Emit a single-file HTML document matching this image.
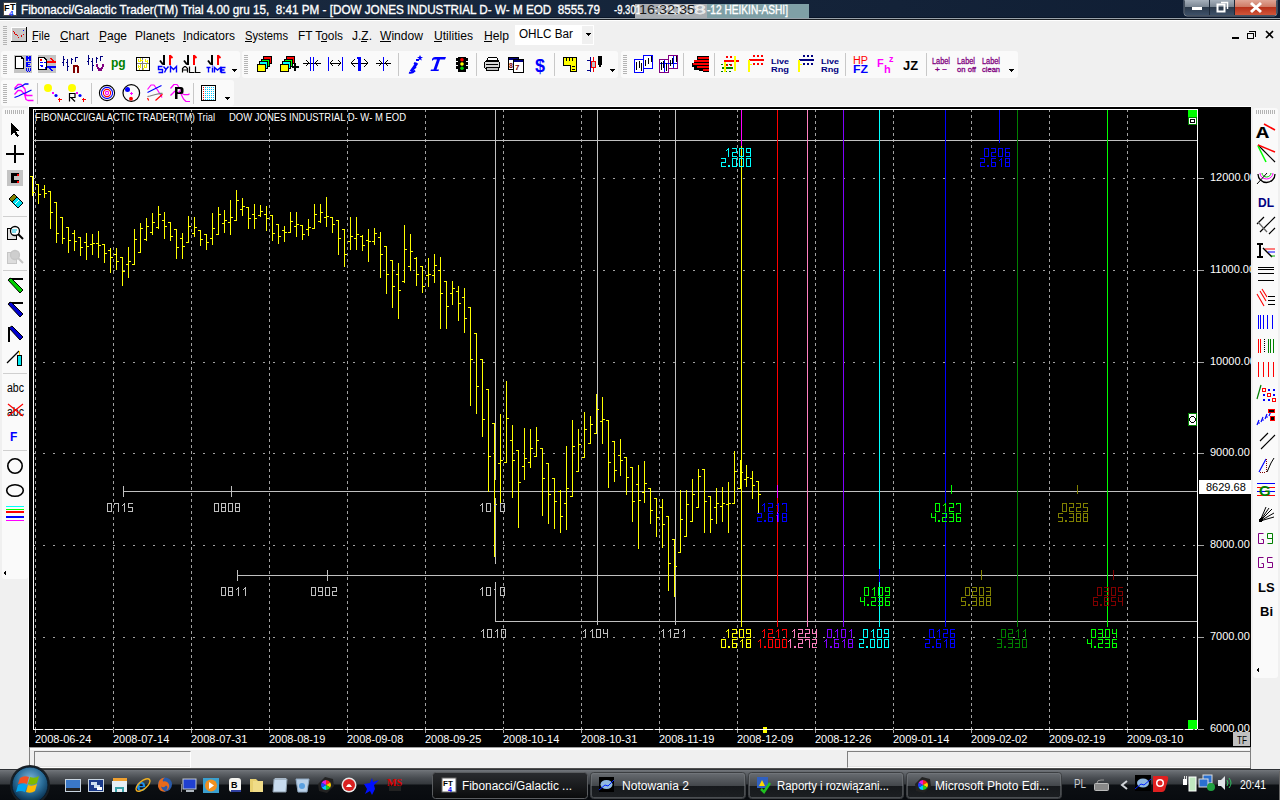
<!DOCTYPE html>
<html><head><meta charset="utf-8"><style>
*{margin:0;padding:0;box-sizing:border-box}
html,body{width:1280px;height:800px;overflow:hidden;background:#f0f0f0;font-family:"Liberation Sans",sans-serif;position:relative}
.a{position:absolute}
.title{left:0;top:0;width:1280px;height:17px;background:linear-gradient(90deg,#1b2b40 0%,#16263c 40%,#132238 70%,#0f1d33 100%)}
.panel{background:#fafafa;border-radius:3px}
.grip{background:repeating-linear-gradient(180deg,#b4b4b4 0 1px,transparent 1px 2px)}
.gripv{background:repeating-linear-gradient(90deg,#b4b4b4 0 1px,transparent 1px 2px)}
</style></head>
<body>
<div class="a title"></div>
<div class="a" style="left:0;top:17px;width:1280px;height:1px;background:#0a1628"></div>
<div class="a" style="left:0;top:18px;width:1280px;height:1px;background:#9aa3ab"></div>
<div class="a" style="left:0;top:19px;width:1280px;height:1px;background:#1a1e22"></div>
<div class="a" style="left:0;top:20px;width:1280px;height:1px;background:#fff"></div>
<div class="a" style="left:635px;top:4px;width:72px;height:14px;background:#a9aeb3"></div>
<div class="a" style="left:707px;top:4px;width:102px;height:14px;background:#7fa0a6"></div>
<svg class="a" style="left:0;top:0" width="1280" height="22"><text x="21" y="13.5" font-family="Liberation Sans" font-size="12.5" fill="#fff" stroke="#fff" stroke-width="0.35" textLength="579" lengthAdjust="spacingAndGlyphs">Fibonacci/Galactic Trader(TM) Trial 4.00 gru 15,&#160; 8:41 PM - [DOW JONES INDUSTRIAL D- W- M EOD&#160; 8555.79</text><text x="614" y="13.5" font-family="Liberation Sans" font-size="12.5" fill="#fff" stroke="#fff" stroke-width="0.35" textLength="27" lengthAdjust="spacingAndGlyphs">-9.301</text><text x="650" y="13.5" font-family="Liberation Sans" font-size="12.5" fill="#fff" stroke="#fff" stroke-width="0.35" fill-opacity=".6" textLength="56" lengthAdjust="spacingAndGlyphs">-2008</text><text x="707" y="13.5" font-family="Liberation Sans" font-size="12.5" fill="#fff" stroke="#fff" stroke-width="0.35" textLength="81" lengthAdjust="spacingAndGlyphs">-12 HEIKIN-ASHI]</text><text x="639" y="14" font-family="Liberation Sans" font-size="13" fill="#1a1a1a" textLength="56" lengthAdjust="spacingAndGlyphs">16:32:35</text></svg>
<svg class="a" style="left:0;top:0" width="1280" height="800"><rect x="3" y="2" width="14" height="14" fill="#fff"/><rect x="3.5" y="2.5" width="13" height="13" fill="none" stroke="#444"/><text x="4" y="11" font-family="Liberation Sans" font-size="9" fill="#000" font-weight="bold" >F</text><text x="10" y="10" font-family="Liberation Sans" font-size="9" fill="#000" font-weight="bold" >T</text><text x="9" y="16" font-family="Liberation Sans" font-size="8" fill="#1a3cff" font-weight="bold" >4</text><defs>
<linearGradient id="gb" x1="0" y1="0" x2="0" y2="1"><stop offset="0" stop-color="#a6b0bb"/><stop offset=".45" stop-color="#7b8794"/><stop offset=".5" stop-color="#2c3a4b"/><stop offset="1" stop-color="#3d5068"/></linearGradient>
<linearGradient id="gr" x1="0" y1="0" x2="0" y2="1"><stop offset="0" stop-color="#e0a595"/><stop offset=".45" stop-color="#cf7b66"/><stop offset=".5" stop-color="#b8321b"/><stop offset="1" stop-color="#d0553a"/></linearGradient>
</defs><path d="M1184 0H1277V13Q1277 16 1274 16H1187Q1184 16 1184 13Z" fill="#1c2838" stroke="#c8d0d8" stroke-opacity=".5"/><rect x="1185" y="0" width="24" height="15" fill="url(#gb)"/><rect x="1210" y="0" width="24" height="15" fill="url(#gb)"/><rect x="1235" y="0" width="41" height="15" fill="url(#gr)"/><rect x="1209" y="0" width="1" height="15" fill="#1c2838"/><rect x="1234" y="0" width="1" height="15" fill="#1c2838"/><rect x="1192" y="7" width="10" height="3" fill="#fff"/><rect x="1217.5" y="4.5" width="7" height="7" fill="none" stroke="#fff" stroke-width="2"/><path d="M1221 2.5H1227.5V9" fill="none" stroke="#fff" stroke-width="1.5"/><path d="M1251 3L1261 12M1261 3L1251 12" stroke="#fff" stroke-width="3" shape-rendering="geometricPrecision"/></svg>
<svg class="a" style="left:0;top:0" width="1280" height="800" shape-rendering="crispEdges"><rect x="3" y="26" width="4" height="1" fill="#b4b4b4"/><rect x="3" y="28" width="4" height="1" fill="#b4b4b4"/><rect x="3" y="30" width="4" height="1" fill="#b4b4b4"/><rect x="3" y="32" width="4" height="1" fill="#b4b4b4"/><rect x="3" y="34" width="4" height="1" fill="#b4b4b4"/><rect x="3" y="36" width="4" height="1" fill="#b4b4b4"/><rect x="3" y="38" width="4" height="1" fill="#b4b4b4"/><rect x="3" y="40" width="4" height="1" fill="#b4b4b4"/><rect x="3" y="42" width="4" height="1" fill="#b4b4b4"/><rect x="3" y="44" width="4" height="1" fill="#b4b4b4"/><rect x="11" y="27" width="15" height="15" fill="#c8c8c8"/><rect x="11" y="27" width="15" height="1" fill="#fff"/><rect x="11" y="27" width="1" height="15" fill="#fff"/><rect x="11" y="41" width="16" height="1" fill="#000"/><rect x="26" y="27" width="1" height="15" fill="#000"/><path d="M13 31L19 38L24 34" fill="none" stroke="#d00" stroke-width="1" stroke-dasharray="1 1"/><rect x="23" y="30" width="1" height="1" fill="#00f"/><rect x="515" y="25" width="79" height="20" fill="#fff"/><rect x="582" y="26" width="11" height="18" fill="#f0f0f0"/><path d="M585 33h6l-3 3z" fill="#000"/><rect x="1232" y="37" width="7" height="2" fill="#000"/><path d="M1247.5 33.5h6v5h-6zM1249.5 31.5h6v5" fill="none" stroke="#000"/><rect x="1247" y="33" width="7" height="1" fill="#000"/><rect x="1249" y="31" width="7" height="1" fill="#000"/><path d="M1266 31L1273 38M1273 31L1266 38" stroke="#000" stroke-width="1.6" shape-rendering="geometricPrecision"/></svg>
<svg class="a" style="left:0;top:0" width="1280" height="50"><text x="32" y="40" font-family="Liberation Sans" font-size="12" fill="#000" textLength="18" lengthAdjust="spacingAndGlyphs">File</text><text x="60" y="40" font-family="Liberation Sans" font-size="12" fill="#000" textLength="29" lengthAdjust="spacingAndGlyphs">Chart</text><text x="99" y="40" font-family="Liberation Sans" font-size="12" fill="#000" textLength="28" lengthAdjust="spacingAndGlyphs">Page</text><text x="135" y="40" font-family="Liberation Sans" font-size="12" fill="#000" textLength="40" lengthAdjust="spacingAndGlyphs">Planets</text><text x="183" y="40" font-family="Liberation Sans" font-size="12" fill="#000" textLength="52" lengthAdjust="spacingAndGlyphs">Indicators</text><text x="245" y="40" font-family="Liberation Sans" font-size="12" fill="#000" textLength="43" lengthAdjust="spacingAndGlyphs">Systems</text><text x="298" y="40" font-family="Liberation Sans" font-size="12" fill="#000" textLength="45" lengthAdjust="spacingAndGlyphs">FT Tools</text><text x="352" y="40" font-family="Liberation Sans" font-size="12" fill="#000" textLength="20" lengthAdjust="spacingAndGlyphs">J.Z.</text><text x="380" y="40" font-family="Liberation Sans" font-size="12" fill="#000" textLength="43" lengthAdjust="spacingAndGlyphs">Window</text><text x="434" y="40" font-family="Liberation Sans" font-size="12" fill="#000" textLength="39" lengthAdjust="spacingAndGlyphs">Utilities</text><text x="484" y="40" font-family="Liberation Sans" font-size="12" fill="#000" textLength="25" lengthAdjust="spacingAndGlyphs">Help</text><text x="519" y="38" font-family="Liberation Sans" font-size="12" fill="#000" textLength="54" lengthAdjust="spacingAndGlyphs">OHLC Bar</text><rect x="32" y="41" width="6" height="1" fill="#000"/><rect x="60" y="41" width="8" height="1" fill="#000"/><rect x="99" y="41" width="7" height="1" fill="#000"/><rect x="164" y="41" width="4" height="1" fill="#000"/><rect x="183" y="41" width="3" height="1" fill="#000"/><rect x="245" y="41" width="7" height="1" fill="#000"/><rect x="321" y="41" width="6" height="1" fill="#000"/><rect x="361" y="41" width="6" height="1" fill="#000"/><rect x="380" y="41" width="11" height="1" fill="#000"/><rect x="434" y="41" width="8" height="1" fill="#000"/><rect x="484" y="41" width="8" height="1" fill="#000"/></svg>
<div class="a panel" style="left:1px;top:51px;width:239px;height:27px"></div>
<div class="a grip" style="left:3px;top:55px;width:4px;height:20px"></div>
<div class="a panel" style="left:242px;top:51px;width:376px;height:27px"></div>
<div class="a grip" style="left:244px;top:55px;width:4px;height:20px"></div>
<div class="a panel" style="left:621px;top:51px;width:397px;height:27px"></div>
<div class="a grip" style="left:623px;top:55px;width:4px;height:20px"></div>
<div class="a panel" style="left:1px;top:80px;width:233px;height:26px"></div>
<div class="a grip" style="left:3px;top:84px;width:4px;height:19px"></div>
<div class="a panel" style="left:2px;top:108px;width:26px;height:471px"></div>
<div class="a gripv" style="left:5px;top:110px;width:20px;height:4px"></div>
<div class="a panel" style="left:1253px;top:108px;width:25px;height:570px"></div>
<div class="a gripv" style="left:1256px;top:110px;width:20px;height:4px"></div>
<svg class="a" style="left:0;top:0" width="1280" height="800" shape-rendering="crispEdges"><rect x="14" y="55" width="18" height="18" fill="#c4c4c4"/><path d="M15.5 56.5h5.5l2.5 2.5v9.5h-8z" fill="#fff" stroke="#000" stroke-width="1.2"/><rect x="21" y="56" width="1" height="3" fill="#000"/><rect x="21" y="58" width="3" height="1" fill="#000"/><rect x="26" y="56" width="2" height="5" fill="#0000ff"/><rect x="29" y="56" width="2" height="5" fill="#0000ff"/><rect x="28" y="57" width="1" height="2" fill="#0000ff"/><rect x="26" y="62" width="2" height="5" fill="#0000ff"/><rect x="26" y="62" width="5" height="1" fill="#0000ff"/><rect x="26" y="64" width="4" height="1" fill="#0000ff"/><rect x="26" y="66" width="5" height="1" fill="#0000ff"/><rect x="26" y="68" width="1" height="3" fill="#0000ff"/><rect x="30" y="68" width="1" height="3" fill="#0000ff"/><rect x="28" y="68" width="1" height="3" fill="#0000ff"/><rect x="27" y="71" width="1" height="1" fill="#0000ff"/><rect x="29" y="71" width="1" height="1" fill="#0000ff"/><rect x="38" y="55" width="18" height="18" fill="#c4c4c4"/><path d="M38.5 57.5h5.5l2.5 2.5v9.5h-8z" fill="#fff" stroke="#000" stroke-width="1.2"/><rect x="40" y="59" width="2" height="2" fill="#f00"/><rect x="40" y="62" width="3" height="1" fill="#00f"/><rect x="44" y="62" width="2" height="1" fill="#00f"/><rect x="40" y="65" width="3" height="1" fill="#00f"/><rect x="41" y="66" width="2" height="1" fill="#00f"/><rect x="45" y="67" width="1" height="2" fill="#00f"/><rect x="47" y="61" width="9" height="2" fill="#f00"/><path d="M49 58h2l4 3h-2z" fill="#f00"/><rect x="47" y="66" width="9" height="2" fill="#00f"/><path d="M48 68h2l4 3h-2z" fill="#00f"/><rect x="63" y="56" width="1" height="10" fill="#000080"/><rect x="62" y="62" width="1" height="1" fill="#000080"/><rect x="64" y="59" width="1" height="1" fill="#000080"/><rect x="67" y="59" width="1" height="12" fill="#000080"/><rect x="66" y="62" width="1" height="1" fill="#000080"/><rect x="68" y="66" width="1" height="1" fill="#000080"/><rect x="71" y="58" width="1" height="6" fill="#000080"/><rect x="72" y="59" width="1" height="1" fill="#000080"/><rect x="75" y="57" width="1" height="5" fill="#000080"/><rect x="76" y="57" width="2" height="1" fill="#000080"/><rect x="73" y="65" width="5" height="2" fill="#800000"/><rect x="73" y="65" width="2" height="8" fill="#800000"/><rect x="77" y="66" width="2" height="7" fill="#800000"/><rect x="88" y="55" width="1" height="10" fill="#000080"/><rect x="87" y="61" width="1" height="1" fill="#000080"/><rect x="89" y="58" width="1" height="1" fill="#000080"/><rect x="92" y="58" width="1" height="13" fill="#000080"/><rect x="91" y="61" width="1" height="1" fill="#000080"/><rect x="93" y="65" width="1" height="1" fill="#000080"/><rect x="96" y="57" width="1" height="6" fill="#000080"/><rect x="97" y="58" width="1" height="1" fill="#000080"/><rect x="100" y="56" width="1" height="5" fill="#000080"/><rect x="101" y="56" width="2" height="1" fill="#000080"/><rect x="96" y="64" width="2" height="3" fill="#800080"/><rect x="102" y="64" width="2" height="3" fill="#800080"/><rect x="97" y="67" width="2" height="2" fill="#800080"/><rect x="101" y="67" width="2" height="2" fill="#800080"/><rect x="99" y="68" width="2" height="3" fill="#800080"/><rect x="98" y="69" width="4" height="2" fill="#800080"/><text x="111" y="67" font-family="Liberation Sans" font-size="12" fill="#008000" font-weight="bold" >pg</text><rect x="136.5" y="57.5" width="13" height="13" fill="#fff" stroke="#000"/><rect x="137" y="63" width="12" height="1" fill="#808080"/><rect x="142" y="58" width="1" height="12" fill="#808080"/><rect x="138" y="59" width="1" height="3" fill="#e8e800"/><rect x="140" y="58" width="1" height="4" fill="#e8e800"/><rect x="145" y="59" width="1" height="3" fill="#e8e800"/><rect x="147" y="60" width="1" height="3" fill="#e8e800"/><rect x="138" y="65" width="1" height="3" fill="#e8e800"/><rect x="140" y="64" width="1" height="4" fill="#e8e800"/><rect x="144" y="65" width="1" height="3" fill="#e8e800"/><rect x="146" y="64" width="1" height="4" fill="#e8e800"/><rect x="139" y="68" width="1" height="2" fill="#e8e800"/><rect x="143" y="68" width="1" height="2" fill="#e8e800"/><rect x="138" y="61" width="2" height="1" fill="#ffff00"/><rect x="141" y="60" width="2" height="1" fill="#ffff00"/><rect x="146" y="61" width="2" height="1" fill="#ffff00"/><rect x="139" y="66" width="2" height="1" fill="#ffff00"/><rect x="145" y="67" width="2" height="1" fill="#ffff00"/><rect x="163" y="55" width="2" height="10" fill="#000"/><path d="M160 60.5l3 4" stroke="#000" stroke-width="1.8" shape-rendering="geometricPrecision"/><rect x="169" y="55" width="2" height="10" fill="#f00"/><path d="M170 55.5l2.5 2.5" stroke="#f00" stroke-width="1.8" shape-rendering="geometricPrecision"/><rect x="187" y="55" width="2" height="10" fill="#000"/><path d="M184 60.5l3 4" stroke="#000" stroke-width="1.8" shape-rendering="geometricPrecision"/><rect x="193" y="55" width="2" height="10" fill="#f00"/><path d="M194 55.5l2.5 2.5" stroke="#f00" stroke-width="1.8" shape-rendering="geometricPrecision"/><rect x="211" y="55" width="2" height="10" fill="#000"/><path d="M208 60.5l3 4" stroke="#000" stroke-width="1.8" shape-rendering="geometricPrecision"/><rect x="217" y="55" width="2" height="10" fill="#f00"/><path d="M218 55.5l2.5 2.5" stroke="#f00" stroke-width="1.8" shape-rendering="geometricPrecision"/><path d="M162.5 66.5H158.5V69.5H162.5V72.5H158.5M163.5 66.5L166.0 69.5L168.5 66.5M166.0 69.5L164.5 72.5M170.5 72.5V66.5L173.5 69.5L176.5 66.5V72.5" fill="none" stroke="#00f" stroke-width="1.4" shape-rendering="geometricPrecision"/><path d="M182.5 72.5V68.5L184.5 66.5H185.5L187.5 68.5V72.5M182.5 70.0H187.5M189.5 66.5V72.5H194.5M195.5 66.5V72.5H200.5" fill="none" stroke="#000" stroke-width="1.2" shape-rendering="geometricPrecision"/><path d="M206.5 67.5H210.5M208.5 67.5V72.5M212.5 67.5V72.5M212.5 65.5V66.5M214.5 72.5V67.5L217.5 70.0L220.5 67.5V72.5M225.5 67.5H221.5V72.5H225.5M221.5 70.0H224.5" fill="none" stroke="#00f" stroke-width="1.4" shape-rendering="geometricPrecision"/><path d="M231 69h6l-3 3z" fill="#000"/><rect x="263.5" y="56.5" width="8" height="7" fill="#f00" stroke="#000"/><rect x="261.5" y="59.5" width="8" height="7" fill="#0f0" stroke="#000"/><rect x="259.5" y="61.5" width="8" height="7" fill="#0ff" stroke="#000"/><rect x="257.5" y="64.5" width="8" height="7" fill="#ff0" stroke="#000"/><rect x="286.5" y="56.5" width="8" height="7" fill="#f00" stroke="#000"/><rect x="284.5" y="59.5" width="8" height="7" fill="#0f0" stroke="#000"/><rect x="282.5" y="61.5" width="8" height="7" fill="#0ff" stroke="#000"/><rect x="280.5" y="64.5" width="8" height="7" fill="#ff0" stroke="#000"/><rect x="292" y="66" width="7" height="2" fill="#000"/><rect x="294" y="63" width="2" height="8" fill="#000"/><rect x="303" y="63" width="18" height="1" fill="#000"/><rect x="310" y="57" width="1" height="14" fill="#00f"/><rect x="313" y="57" width="1" height="14" fill="#00f"/><path d="M306 60l3 3-3 3M318 60l-3 3 3 3" fill="none" stroke="#000"/><rect x="328" y="57" width="1" height="14" fill="#00f"/><rect x="342" y="57" width="1" height="14" fill="#00f"/><rect x="330" y="63" width="11" height="1" fill="#000"/><path d="M333 60l-3 3 3 3M338 60l3 3-3 3" fill="none" stroke="#000"/><rect x="351" y="63" width="17" height="1" fill="#000"/><rect x="358" y="57" width="3" height="14" fill="#00f"/><rect x="357" y="57" width="2" height="2" fill="#00f"/><path d="M355 59l-4 4 4 4M364 59l4 4-4 4" fill="none" stroke="#000"/><rect x="376" y="63" width="15" height="1" fill="#000"/><rect x="383" y="57" width="1" height="14" fill="#00f"/><path d="M379 60l3 3-3 3M388 60l-3 3 3 3" fill="none" stroke="#000"/><rect x="398" y="53" width="1" height="23" fill="#c8c8c8"/><g shape-rendering="geometricPrecision"><path d="M417 63L411 71.5" stroke="#00f" stroke-width="3"/><path d="M409 72.5q3 1 6-2M413 69l3-2" stroke="#00f" stroke-width="2" fill="none"/><path d="M416 64l-2-1M416 60l3 0" stroke="#00f" stroke-width="2"/><path d="M420 55l1 2h2l-2 1.5 1 2-2-1-2 1 1-2-2-1.5h2z" fill="#00f"/></g><g shape-rendering="geometricPrecision"><path d="M432 59q1-2 3-2h11l-1 2.5h-5l-3.5 10h2.5l-.5 1.5h-8l.5-1.5h2.5l3.5-10h-3q-1 0-2 1.5z" fill="#00f"/></g><g shape-rendering="geometricPrecision"><path d="M458 57h8v15h-8z" fill="#000"/><path d="M456 58h3l-1 3h-2zM468 58h-3l1 3h2zM456 62h3l-1 3h-2zM468 62h-3l1 3h2zM456 66h3l-1 3h-2zM468 66h-3l1 3h2z" fill="#000"/><circle cx="462" cy="59.8" r="1.8" fill="#f00"/><circle cx="462" cy="64" r="1.8" fill="#ff0"/><circle cx="462" cy="68.2" r="1.8" fill="#0c0"/></g><rect x="476" y="53" width="1" height="23" fill="#c8c8c8"/><path d="M488.5 57.5h8l2 3h-12z" fill="#fff" stroke="#000"/><rect x="484.5" y="61.5" width="15" height="7" rx="2" fill="#d8d8d8" stroke="#000"/><rect x="486" y="64" width="12" height="1" fill="#000"/><rect x="486" y="67" width="12" height="1" fill="#808080"/><rect x="486.5" y="67.5" width="12" height="3" fill="#c0c0c0" stroke="#000"/><rect x="508.5" y="57.5" width="10" height="12" fill="#fff" stroke="#000"/><rect x="509" y="58" width="9" height="2" fill="#000080"/><rect x="513.5" y="59.5" width="10" height="13" fill="#fff" stroke="#000"/><rect x="514" y="60" width="9" height="2" fill="#000080"/><text x="509" y="68" font-family="Liberation Sans" font-size="7" fill="#800000" font-weight="bold" >8</text><text x="515" y="70" font-family="Liberation Sans" font-size="8" fill="#800000" font-weight="bold" >7</text><text x="535" y="72" font-family="Liberation Sans" font-size="18" fill="#00f" font-weight="bold" >$</text><rect x="554" y="53" width="1" height="23" fill="#c8c8c8"/><path d="M563.5 57.5h13v14h-6v-6h-7z" fill="#ff0" stroke="#000"/><rect x="566" y="58" width="1" height="3" fill="#000"/><rect x="569" y="58" width="1" height="3" fill="#000"/><rect x="572" y="58" width="1" height="3" fill="#000"/><rect x="572" y="66" width="3" height="1" fill="#000"/><rect x="572" y="69" width="3" height="1" fill="#000"/><rect x="590" y="57" width="1" height="15" fill="#00008b"/><rect x="587" y="60" width="3" height="1" fill="#00008b"/><rect x="587" y="70" width="3" height="1" fill="#00008b"/><rect x="593" y="57" width="1" height="15" fill="#f00"/><rect x="591.5" y="61.5" width="4" height="6" fill="#c0c0c0" stroke="#f00"/><rect x="598" y="56" width="4" height="9" fill="#000"/><rect x="599" y="65" width="2" height="2" fill="#000"/><path d="M609 69h6l-3 3z" fill="#000"/><rect x="634.5" y="59.5" width="9" height="13" fill="#fff" stroke="#00f"/><rect x="643.5" y="55.5" width="9" height="13" fill="#fff" stroke="#00f"/><rect x="636" y="62" width="1" height="8" fill="#000"/><rect x="639" y="61" width="1" height="7" fill="#000"/><rect x="641" y="63" width="1" height="8" fill="#000"/><rect x="645" y="60" width="1" height="6" fill="#000"/><rect x="648" y="58" width="1" height="6" fill="#000"/><rect x="651" y="56" width="1" height="6" fill="#000"/><rect x="659.5" y="59.5" width="9" height="13" fill="#fff" stroke="#800080"/><rect x="668.5" y="55.5" width="9" height="13" fill="#fff" stroke="#800080"/><rect x="660" y="63" width="17" height="1" fill="#00f"/><rect x="664" y="60" width="1" height="12" fill="#00f"/><rect x="673" y="56" width="1" height="12" fill="#00f"/><rect x="661" y="62" width="1" height="8" fill="#000"/><rect x="663" y="61" width="1" height="7" fill="#000"/><rect x="666" y="63" width="1" height="8" fill="#000"/><rect x="670" y="60" width="1" height="6" fill="#000"/><rect x="672" y="58" width="1" height="6" fill="#000"/><rect x="676" y="56" width="1" height="6" fill="#000"/><rect x="683" y="53" width="1" height="23" fill="#c8c8c8"/><path d="M697 56h12v16h-6v-1h-4v-1h-5v-3h-2v-4h2v-3h3z" fill="#000"/><rect x="698" y="57" width="11" height="2" fill="#f00"/><rect x="694" y="60" width="15" height="2" fill="#f00"/><rect x="693" y="63" width="16" height="2" fill="#f00"/><rect x="697" y="66" width="12" height="2" fill="#f00"/><rect x="703" y="69" width="6" height="2" fill="#f00"/><rect x="714" y="53" width="1" height="23" fill="#c8c8c8"/><rect x="724" y="60" width="15" height="2" fill="#f00"/><rect x="726" y="56" width="2" height="2" fill="#f00"/><rect x="726" y="64" width="2" height="2" fill="#f00"/><rect x="730" y="56" width="2" height="2" fill="#f00"/><rect x="730" y="64" width="2" height="2" fill="#f00"/><rect x="734" y="56" width="2" height="2" fill="#f00"/><rect x="734" y="64" width="2" height="2" fill="#f00"/><rect x="734" y="56" width="2" height="15" fill="#ff0"/><rect x="722" y="67" width="11" height="2" fill="#008000"/><rect x="721" y="64" width="2" height="1" fill="#008000"/><rect x="721" y="71" width="2" height="1" fill="#008000"/><rect x="725" y="64" width="2" height="1" fill="#008000"/><rect x="725" y="71" width="2" height="1" fill="#008000"/><rect x="729" y="64" width="2" height="1" fill="#008000"/><rect x="729" y="71" width="2" height="1" fill="#008000"/><rect x="724" y="62" width="2" height="10" fill="#ff0"/><rect x="749" y="59" width="15" height="2" fill="#f00"/><rect x="753" y="55" width="2" height="2" fill="#f00"/><rect x="753" y="63" width="2" height="2" fill="#f00"/><rect x="757" y="55" width="2" height="2" fill="#f00"/><rect x="757" y="63" width="2" height="2" fill="#f00"/><rect x="761" y="55" width="2" height="2" fill="#f00"/><rect x="761" y="63" width="2" height="2" fill="#f00"/><rect x="748" y="60" width="2" height="12" fill="#ff0"/><rect x="750" y="64" width="2" height="1" fill="#ff0"/><rect x="799" y="59" width="15" height="2" fill="#000080"/><rect x="803" y="55" width="2" height="2" fill="#000080"/><rect x="803" y="63" width="2" height="2" fill="#000080"/><rect x="807" y="55" width="2" height="2" fill="#000080"/><rect x="807" y="63" width="2" height="2" fill="#000080"/><rect x="811" y="55" width="2" height="2" fill="#000080"/><rect x="811" y="63" width="2" height="2" fill="#000080"/><rect x="798" y="60" width="2" height="12" fill="#ff0"/><rect x="800" y="64" width="2" height="1" fill="#ff0"/><text x="771" y="64" font-family="Liberation Sans" font-size="8" fill="#000080" font-weight="bold" textLength="18" lengthAdjust="spacingAndGlyphs">Live</text><text x="771" y="72" font-family="Liberation Sans" font-size="8" fill="#000080" font-weight="bold" textLength="18" lengthAdjust="spacingAndGlyphs">Rng</text><text x="821" y="64" font-family="Liberation Sans" font-size="8" fill="#000080" font-weight="bold" textLength="18" lengthAdjust="spacingAndGlyphs">Live</text><text x="821" y="72" font-family="Liberation Sans" font-size="8" fill="#000080" font-weight="bold" textLength="18" lengthAdjust="spacingAndGlyphs">Rng</text><rect x="845" y="53" width="1" height="23" fill="#c8c8c8"/><text x="853" y="64" font-family="Liberation Sans" font-size="10" fill="#f00" font-weight="normal" textLength="15" lengthAdjust="spacingAndGlyphs">HP</text><text x="853" y="73" font-family="Liberation Sans" font-size="11" fill="#00f" font-weight="bold" textLength="15" lengthAdjust="spacingAndGlyphs">FZ</text><text x="877" y="67" font-family="Liberation Sans" font-size="11" fill="#f0f" font-weight="bold" >F</text><text x="884" y="73" font-family="Liberation Sans" font-size="11" fill="#f0f" font-weight="bold" >h</text><text x="889" y="62" font-family="Liberation Sans" font-size="9" fill="#f0f" font-weight="bold" >z</text><text x="903" y="70" font-family="Liberation Sans" font-size="12" fill="#000" font-weight="bold" textLength="15" lengthAdjust="spacingAndGlyphs">JZ</text><rect x="926" y="53" width="1" height="23" fill="#c8c8c8"/><text x="932" y="63.5" font-family="Liberation Sans" font-size="9.5" fill="#800080" font-weight="normal" stroke="#800080" stroke-width="0.3" textLength="18" lengthAdjust="spacingAndGlyphs">Label</text><text x="935" y="71.5" font-family="Liberation Sans" font-size="8" fill="#800080" font-weight="normal" stroke="#800080" stroke-width="0.3" textLength="12" lengthAdjust="spacingAndGlyphs">+ −</text><text x="957" y="63.5" font-family="Liberation Sans" font-size="9.5" fill="#800080" font-weight="normal" stroke="#800080" stroke-width="0.3" textLength="18" lengthAdjust="spacingAndGlyphs">Label</text><text x="957" y="71.5" font-family="Liberation Sans" font-size="8" fill="#800080" font-weight="normal" stroke="#800080" stroke-width="0.3" textLength="19" lengthAdjust="spacingAndGlyphs">on off</text><text x="982" y="63.5" font-family="Liberation Sans" font-size="9.5" fill="#800080" font-weight="normal" stroke="#800080" stroke-width="0.3" textLength="18" lengthAdjust="spacingAndGlyphs">Label</text><text x="982" y="71.5" font-family="Liberation Sans" font-size="8" fill="#800080" font-weight="normal" stroke="#800080" stroke-width="0.3" textLength="18" lengthAdjust="spacingAndGlyphs">clean</text><path d="M1008 69h6l-3 3z" fill="#000"/><g fill="none" stroke-width="1.3" shape-rendering="geometricPrecision" stroke-linejoin="round"><path d="M14.5 88.5L18 84.5h3l4 4.5 1 6.5h6.5M14.5 94.5L18 90.5h3l3.5 3.5 1.5 5.5 2 1h5.5" stroke="#f0f"/><path d="M14.5 89.5L18 87.5l4-1.5 3-2h3.5M14.5 97.5l4-1.5 4-2 4-1.5 5-2.5" stroke="#00f"/></g><rect x="37" y="83" width="1" height="21" fill="#c8c8c8"/><circle cx="48" cy="88" r="4" fill="#ff0" shape-rendering="geometricPrecision"/><rect x="52" y="92" width="2" height="2" fill="#f0f"/><circle cx="56" cy="95.5" r="1.6" fill="#00f" shape-rendering="geometricPrecision"/><path d="M57.5 99.5h4M59.5 97.5v4" stroke="#f00" stroke-width="1.4"/><circle cx="72" cy="88" r="4" fill="#ff0" shape-rendering="geometricPrecision"/><rect x="76" y="92" width="2" height="2" fill="#f0f"/><circle cx="80" cy="95.5" r="1.6" fill="#00f" shape-rendering="geometricPrecision"/><path d="M81.5 99.5h4M83.5 97.5v4" stroke="#f00" stroke-width="1.4"/><path d="M69.5 101.5V93.5h5.5v4h-5.5M71 97.5l4 4" fill="none" stroke="#000" stroke-width="1.2" shape-rendering="geometricPrecision"/><rect x="91" y="83" width="1" height="21" fill="#c8c8c8"/><g fill="none" shape-rendering="geometricPrecision"><circle cx="107" cy="93" r="7.6" stroke="#000" stroke-width="1.1"/><circle cx="107" cy="93" r="5.6" stroke="#00f" stroke-width="1.1"/><circle cx="107" cy="93" r="3.6" stroke="#f00" stroke-width="1.1"/><circle cx="107" cy="93" r="1.6" stroke="#f0f" stroke-width="1.1"/></g><g shape-rendering="geometricPrecision"><circle cx="131.3" cy="93" r="8.3" fill="none" stroke="#000" stroke-width="1.2"/><circle cx="127.5" cy="89.5" r="2.5" fill="#00f"/><circle cx="131" cy="98.7" r="1.9" fill="#f00"/><path d="M130 93.5h3M131.5 92v3" stroke="#f0f"/></g><path d="M147.5 89.5L151 85h3l3.5 5 2.5 4 2 3.5" stroke="#f0f" shape-rendering="geometricPrecision" fill="none" stroke-width="1.2" stroke-linejoin="round"/><path d="M147.5 92.5L161.5 85.5" stroke="#00f" shape-rendering="geometricPrecision" fill="none" stroke-width="1.2" stroke-linejoin="round"/><path d="M147.5 96.5L150 96l5.5-1.5 5-1.2h2" stroke="#808080" shape-rendering="geometricPrecision" fill="none" stroke-width="1.2" stroke-linejoin="round"/><path d="M147.5 98l1.2 2.5M155.5 100.5l7-6.2" stroke="#f00" shape-rendering="geometricPrecision" fill="none" stroke-width="1.2" stroke-linejoin="round"/><path d="M170.5 88.5L174 84.5h3l3.5 5M170.5 95.5L175 91M181 94l2.5 5 2.5 2.5h4M182 93.5l2.5 1.2h3.5l1.5-1" stroke="#f0f" shape-rendering="geometricPrecision" fill="none" stroke-width="1.2" stroke-linejoin="round"/><path d="M175 87h6q2.5 0 2.5 2.5v2q0 2.5-2.5 2.5h-3.5v5h-2.5zM177.5 89v3h3v-3z" fill="#000" fill-rule="evenodd" shape-rendering="geometricPrecision"/><path d="M178.5 92.5l2-2" stroke="#f0f" shape-rendering="geometricPrecision" fill="none" stroke-width="1.2" stroke-linejoin="round"/><rect x="193" y="83" width="1" height="21" fill="#c8c8c8"/><rect x="201.5" y="85.5" width="14" height="15" fill="#fff" stroke="#000"/><rect x="203" y="87" width="1" height="1" fill="#f00"/><rect x="205" y="87" width="1" height="1" fill="#00c8ff"/><rect x="207" y="87" width="1" height="1" fill="#00c8ff"/><rect x="209" y="87" width="1" height="1" fill="#00c8ff"/><rect x="211" y="87" width="1" height="1" fill="#00c8ff"/><rect x="213" y="87" width="1" height="1" fill="#00c8ff"/><rect x="203" y="89" width="1" height="1" fill="#f00"/><rect x="205" y="89" width="1" height="1" fill="#00c8ff"/><rect x="207" y="89" width="1" height="1" fill="#00c8ff"/><rect x="209" y="89" width="1" height="1" fill="#00c8ff"/><rect x="211" y="89" width="1" height="1" fill="#00c8ff"/><rect x="213" y="89" width="1" height="1" fill="#00c8ff"/><rect x="203" y="91" width="1" height="1" fill="#f00"/><rect x="205" y="91" width="1" height="1" fill="#00c8ff"/><rect x="207" y="91" width="1" height="1" fill="#00c8ff"/><rect x="209" y="91" width="1" height="1" fill="#00c8ff"/><rect x="211" y="91" width="1" height="1" fill="#00c8ff"/><rect x="213" y="91" width="1" height="1" fill="#00c8ff"/><rect x="203" y="93" width="1" height="1" fill="#f00"/><rect x="205" y="93" width="1" height="1" fill="#00c8ff"/><rect x="207" y="93" width="1" height="1" fill="#00c8ff"/><rect x="209" y="93" width="1" height="1" fill="#00c8ff"/><rect x="211" y="93" width="1" height="1" fill="#00c8ff"/><rect x="213" y="93" width="1" height="1" fill="#00c8ff"/><rect x="203" y="95" width="1" height="1" fill="#f00"/><rect x="205" y="95" width="1" height="1" fill="#00c8ff"/><rect x="207" y="95" width="1" height="1" fill="#00c8ff"/><rect x="209" y="95" width="1" height="1" fill="#00c8ff"/><rect x="211" y="95" width="1" height="1" fill="#00c8ff"/><rect x="213" y="95" width="1" height="1" fill="#00c8ff"/><rect x="203" y="97" width="1" height="1" fill="#f00"/><rect x="205" y="97" width="1" height="1" fill="#00c8ff"/><rect x="207" y="97" width="1" height="1" fill="#00c8ff"/><rect x="209" y="97" width="1" height="1" fill="#00c8ff"/><rect x="211" y="97" width="1" height="1" fill="#00c8ff"/><rect x="213" y="97" width="1" height="1" fill="#00c8ff"/><rect x="203" y="99" width="1" height="1" fill="#f00"/><rect x="205" y="99" width="1" height="1" fill="#00c8ff"/><rect x="207" y="99" width="1" height="1" fill="#00c8ff"/><rect x="209" y="99" width="1" height="1" fill="#00c8ff"/><rect x="211" y="99" width="1" height="1" fill="#00c8ff"/><rect x="213" y="99" width="1" height="1" fill="#00c8ff"/><path d="M224 97h6l-3 3z" fill="#000"/></svg>
<svg class="a" style="left:0;top:0" width="1280" height="800" shape-rendering="crispEdges"><rect x="29" y="107" width="1222" height="640" fill="#000"/>
<rect x="28" y="106" width="1223" height="1" fill="#fff"/><rect x="28" y="106" width="1" height="641" fill="#fff"/>
<line x1="33" y1="178.5" x2="1197" y2="178.5" stroke="#a0a0a0" stroke-dasharray="2 8" stroke-dashoffset="-0"/>
<line x1="33" y1="270.5" x2="1197" y2="270.5" stroke="#a0a0a0" stroke-dasharray="2 8" stroke-dashoffset="-0"/>
<line x1="33" y1="362.5" x2="1197" y2="362.5" stroke="#a0a0a0" stroke-dasharray="2 8" stroke-dashoffset="-0"/>
<line x1="33" y1="453.5" x2="1197" y2="453.5" stroke="#a0a0a0" stroke-dasharray="2 8" stroke-dashoffset="-0"/>
<line x1="33" y1="545.5" x2="1197" y2="545.5" stroke="#a0a0a0" stroke-dasharray="2 8" stroke-dashoffset="-0"/>
<line x1="33" y1="637.5" x2="1197" y2="637.5" stroke="#a0a0a0" stroke-dasharray="2 8" stroke-dashoffset="-0"/>
<line x1="35.5" y1="109" x2="35.5" y2="730" stroke="#a0a0a0" stroke-dasharray="3 3"/><rect x="35" y="730" width="1" height="3" fill="#a0a0a0"/>
<line x1="113.5" y1="109" x2="113.5" y2="730" stroke="#a0a0a0" stroke-dasharray="3 3"/><rect x="113" y="730" width="1" height="3" fill="#a0a0a0"/>
<line x1="191.5" y1="109" x2="191.5" y2="730" stroke="#a0a0a0" stroke-dasharray="3 3"/><rect x="191" y="730" width="1" height="3" fill="#a0a0a0"/>
<line x1="269.5" y1="109" x2="269.5" y2="730" stroke="#a0a0a0" stroke-dasharray="3 3"/><rect x="269" y="730" width="1" height="3" fill="#a0a0a0"/>
<line x1="347.5" y1="109" x2="347.5" y2="730" stroke="#a0a0a0" stroke-dasharray="3 3"/><rect x="347" y="730" width="1" height="3" fill="#a0a0a0"/>
<line x1="425.5" y1="109" x2="425.5" y2="730" stroke="#a0a0a0" stroke-dasharray="3 3"/><rect x="425" y="730" width="1" height="3" fill="#a0a0a0"/>
<line x1="503.5" y1="109" x2="503.5" y2="730" stroke="#a0a0a0" stroke-dasharray="3 3"/><rect x="503" y="730" width="1" height="3" fill="#a0a0a0"/>
<line x1="581.5" y1="109" x2="581.5" y2="730" stroke="#a0a0a0" stroke-dasharray="3 3"/><rect x="581" y="730" width="1" height="3" fill="#a0a0a0"/>
<line x1="659.5" y1="109" x2="659.5" y2="730" stroke="#a0a0a0" stroke-dasharray="3 3"/><rect x="659" y="730" width="1" height="3" fill="#a0a0a0"/>
<line x1="737.5" y1="109" x2="737.5" y2="730" stroke="#a0a0a0" stroke-dasharray="3 3"/><rect x="737" y="730" width="1" height="3" fill="#a0a0a0"/>
<line x1="815.5" y1="109" x2="815.5" y2="730" stroke="#a0a0a0" stroke-dasharray="3 3"/><rect x="815" y="730" width="1" height="3" fill="#a0a0a0"/>
<line x1="893.5" y1="109" x2="893.5" y2="730" stroke="#a0a0a0" stroke-dasharray="3 3"/><rect x="893" y="730" width="1" height="3" fill="#a0a0a0"/>
<line x1="971.5" y1="109" x2="971.5" y2="730" stroke="#a0a0a0" stroke-dasharray="3 3"/><rect x="971" y="730" width="1" height="3" fill="#a0a0a0"/>
<line x1="1049.5" y1="109" x2="1049.5" y2="730" stroke="#a0a0a0" stroke-dasharray="3 3"/><rect x="1049" y="730" width="1" height="3" fill="#a0a0a0"/>
<line x1="1127.5" y1="109" x2="1127.5" y2="730" stroke="#a0a0a0" stroke-dasharray="3 3"/><rect x="1127" y="730" width="1" height="3" fill="#a0a0a0"/>
<path d="M33.5 109.5H1197.5V729" fill="none" stroke="#fff"/>
<line x1="33.5" y1="109" x2="33.5" y2="729.5" stroke="#fff"/>
<rect x="33" y="729" width="1164" height="1" fill="#585858"/>
<line x1="35" y1="729.5" x2="1197" y2="729.5" stroke="#fff" stroke-dasharray="8 2"/><rect x="33" y="729" width="2" height="1" fill="#fff"/>
<line x1="1197.5" y1="109" x2="1197.5" y2="729" stroke="#fff"/>
<line x1="1198" y1="178.5" x2="1204" y2="178.5" stroke="#a0a0a0"/>
<line x1="1198" y1="270.5" x2="1204" y2="270.5" stroke="#a0a0a0"/>
<line x1="1198" y1="362.5" x2="1204" y2="362.5" stroke="#a0a0a0"/>
<line x1="1198" y1="453.5" x2="1204" y2="453.5" stroke="#a0a0a0"/>
<line x1="1198" y1="545.5" x2="1204" y2="545.5" stroke="#a0a0a0"/>
<line x1="1198" y1="637.5" x2="1204" y2="637.5" stroke="#a0a0a0"/>
<line x1="1198" y1="729.5" x2="1204" y2="729.5" stroke="#a0a0a0"/>
<line x1="33" y1="140.5" x2="1197" y2="140.5" stroke="#c0c0c0"/>
<rect x="597" y="110" width="1" height="515" fill="#c0c0c0"/>
<rect x="675" y="110" width="1" height="515" fill="#c0c0c0"/>
<rect x="495" y="110" width="1" height="370" fill="#c0c0c0"/>
<rect x="495" y="498" width="1" height="66" fill="#c0c0c0"/>
<rect x="495" y="582" width="1" height="40" fill="#c0c0c0"/>
<line x1="123" y1="491.5" x2="1197" y2="491.5" stroke="#c0c0c0"/>
<line x1="237" y1="575.5" x2="1197" y2="575.5" stroke="#c0c0c0"/>
<line x1="495" y1="621.5" x2="1197" y2="621.5" stroke="#c0c0c0"/>
<line x1="123.5" y1="486" x2="123.5" y2="497" stroke="#c0c0c0"/>
<line x1="231.5" y1="486" x2="231.5" y2="497" stroke="#c0c0c0"/>
<line x1="237.5" y1="570" x2="237.5" y2="581" stroke="#c0c0c0"/>
<line x1="327.5" y1="570" x2="327.5" y2="581" stroke="#c0c0c0"/>
<path fill="#ffff00" d="M32 176h1v20h-1zM30 176h2v1h-2zM33 192h2v1h-2zM38 184h1v20h-1zM36 184h2v1h-2zM39 194h2v1h-2zM44 185h1v13h-1zM42 189h2v1h-2zM45 193h2v1h-2zM50 191h1v38h-1zM48 191h2v1h-2zM51 212h2v1h-2zM56 202h1v41h-1zM54 202h2v1h-2zM57 233h2v1h-2zM62 217h1v27h-1zM60 217h2v1h-2zM63 238h2v1h-2zM68 227h1v26h-1zM66 227h2v1h-2zM69 240h2v1h-2zM74 230h1v21h-1zM72 233h2v1h-2zM75 241h2v1h-2zM80 237h1v19h-1zM78 237h2v1h-2zM81 247h2v1h-2zM86 233h1v27h-1zM84 242h2v1h-2zM87 246h2v1h-2zM92 234h1v21h-1zM90 244h2v1h-2zM93 243h2v1h-2zM98 231h1v27h-1zM96 243h2v1h-2zM99 245h2v1h-2zM104 244h1v19h-1zM102 244h2v1h-2zM105 253h2v1h-2zM110 248h1v25h-1zM108 250h2v1h-2zM111 257h2v1h-2zM116 248h1v22h-1zM114 254h2v1h-2zM117 261h2v1h-2zM122 257h1v29h-1zM120 257h2v1h-2zM123 271h2v1h-2zM128 247h1v31h-1zM126 264h2v1h-2zM129 261h2v1h-2zM134 229h1v36h-1zM132 264h2v1h-2zM135 239h2v1h-2zM140 223h1v30h-1zM138 252h2v1h-2zM141 228h2v1h-2zM146 218h1v23h-1zM144 239h2v1h-2zM147 226h2v1h-2zM152 213h1v22h-1zM150 232h2v1h-2zM153 222h2v1h-2zM158 206h1v23h-1zM156 227h2v1h-2zM159 214h2v1h-2zM164 212h1v27h-1zM162 220h2v1h-2zM165 226h2v1h-2zM170 222h1v19h-1zM168 222h2v1h-2zM171 236h2v1h-2zM176 229h1v30h-1zM174 229h2v1h-2zM177 247h2v1h-2zM182 233h1v26h-1zM180 238h2v1h-2zM183 246h2v1h-2zM188 216h1v27h-1zM186 242h2v1h-2zM189 226h2v1h-2zM194 217h1v20h-1zM192 233h2v1h-2zM195 227h2v1h-2zM200 230h1v16h-1zM198 230h2v1h-2zM201 239h2v1h-2zM206 234h1v16h-1zM204 234h2v1h-2zM207 242h2v1h-2zM212 213h1v32h-1zM210 238h2v1h-2zM213 228h2v1h-2zM218 207h1v28h-1zM216 234h2v1h-2zM219 214h2v1h-2zM224 210h1v23h-1zM222 223h2v1h-2zM225 220h2v1h-2zM230 200h1v35h-1zM228 222h2v1h-2zM231 217h2v1h-2zM236 190h1v31h-1zM234 220h2v1h-2zM237 200h2v1h-2zM242 198h1v18h-1zM240 209h2v1h-2zM243 206h2v1h-2zM248 207h1v22h-1zM246 207h2v1h-2zM249 218h2v1h-2zM254 204h1v25h-1zM252 214h2v1h-2zM255 218h2v1h-2zM260 205h1v12h-1zM258 215h2v1h-2zM261 211h2v1h-2zM266 206h1v25h-1zM264 214h2v1h-2zM267 218h2v1h-2zM272 215h1v26h-1zM270 215h2v1h-2zM273 233h2v1h-2zM278 224h1v20h-1zM276 224h2v1h-2zM279 236h2v1h-2zM284 226h1v16h-1zM282 230h2v1h-2zM285 232h2v1h-2zM290 212h1v21h-1zM288 232h2v1h-2zM291 221h2v1h-2zM296 212h1v25h-1zM294 226h2v1h-2zM297 224h2v1h-2zM302 225h1v15h-1zM300 225h2v1h-2zM303 234h2v1h-2zM308 219h1v17h-1zM306 229h2v1h-2zM309 227h2v1h-2zM314 204h1v25h-1zM312 228h2v1h-2zM315 214h2v1h-2zM320 204h1v19h-1zM318 221h2v1h-2zM321 212h2v1h-2zM326 197h1v30h-1zM324 217h2v1h-2zM327 216h2v1h-2zM332 217h1v16h-1zM330 217h2v1h-2zM333 224h2v1h-2zM338 220h1v35h-1zM336 220h2v1h-2zM339 238h2v1h-2zM344 229h1v38h-1zM342 229h2v1h-2zM345 254h2v1h-2zM350 217h1v33h-1zM348 241h2v1h-2zM351 236h2v1h-2zM356 217h1v33h-1zM354 238h2v1h-2zM357 234h2v1h-2zM362 235h1v16h-1zM360 236h2v1h-2zM363 245h2v1h-2zM368 229h1v33h-1zM366 240h2v1h-2zM369 241h2v1h-2zM374 228h1v17h-1zM372 241h2v1h-2zM375 233h2v1h-2zM380 232h1v46h-1zM378 237h2v1h-2zM381 254h2v1h-2zM386 246h1v48h-1zM384 246h2v1h-2zM387 274h2v1h-2zM392 260h1v48h-1zM390 260h2v1h-2zM393 286h2v1h-2zM398 263h1v56h-1zM396 274h2v1h-2zM399 290h2v1h-2zM404 225h1v58h-1zM402 281h2v1h-2zM405 249h2v1h-2zM410 234h1v37h-1zM408 266h2v1h-2zM411 251h2v1h-2zM416 257h1v29h-1zM414 258h2v1h-2zM417 274h2v1h-2zM422 266h1v27h-1zM420 266h2v1h-2zM423 286h2v1h-2zM428 258h1v29h-1zM426 275h2v1h-2zM429 274h2v1h-2zM434 254h1v29h-1zM432 275h2v1h-2zM435 265h2v1h-2zM440 257h1v72h-1zM438 270h2v1h-2zM441 293h2v1h-2zM446 281h1v48h-1zM444 281h2v1h-2zM447 306h2v1h-2zM452 281h1v24h-1zM450 293h2v1h-2zM453 288h2v1h-2zM458 286h1v35h-1zM456 291h2v1h-2zM459 303h2v1h-2zM464 288h1v45h-1zM462 297h2v1h-2zM465 318h2v1h-2zM470 307h1v99h-1zM468 307h2v1h-2zM471 359h2v1h-2zM476 333h1v81h-1zM474 333h2v1h-2zM477 386h2v1h-2zM482 359h1v78h-1zM480 359h2v1h-2zM483 419h2v1h-2zM488 389h1v103h-1zM486 389h2v1h-2zM489 456h2v1h-2zM494 423h1v134h-1zM492 423h2v1h-2zM495 504h2v1h-2zM500 414h1v90h-1zM498 463h2v1h-2zM501 460h2v1h-2zM506 381h1v82h-1zM504 462h2v1h-2zM507 418h2v1h-2zM512 425h1v73h-1zM510 440h2v1h-2zM513 460h2v1h-2zM518 450h1v78h-1zM516 450h2v1h-2zM519 482h2v1h-2zM524 428h1v52h-1zM522 466h2v1h-2zM525 458h2v1h-2zM530 429h1v39h-1zM528 462h2v1h-2zM531 448h2v1h-2zM536 427h1v30h-1zM534 456h2v1h-2zM537 440h2v1h-2zM542 448h1v68h-1zM540 448h2v1h-2zM543 478h2v1h-2zM548 463h1v61h-1zM546 463h2v1h-2zM549 494h2v1h-2zM554 478h1v51h-1zM552 478h2v1h-2zM555 501h2v1h-2zM560 490h1v43h-1zM558 491h2v1h-2zM561 516h2v1h-2zM566 446h1v84h-1zM564 503h2v1h-2zM567 488h2v1h-2zM572 420h1v77h-1zM570 496h2v1h-2zM573 446h2v1h-2zM578 429h1v43h-1zM576 471h2v1h-2zM579 444h2v1h-2zM584 412h1v46h-1zM582 457h2v1h-2zM585 429h2v1h-2zM590 416h1v28h-1zM588 443h2v1h-2zM591 424h2v1h-2zM596 394h1v40h-1zM594 433h2v1h-2zM597 409h2v1h-2zM602 397h1v47h-1zM600 421h2v1h-2zM603 419h2v1h-2zM608 420h1v68h-1zM606 420h2v1h-2zM609 462h2v1h-2zM614 441h1v41h-1zM612 441h2v1h-2zM615 470h2v1h-2zM620 439h1v37h-1zM618 455h2v1h-2zM621 460h2v1h-2zM626 457h1v38h-1zM624 457h2v1h-2zM627 477h2v1h-2zM632 467h1v55h-1zM630 467h2v1h-2zM633 501h2v1h-2zM638 465h1v84h-1zM636 484h2v1h-2zM639 500h2v1h-2zM644 461h1v42h-1zM642 492h2v1h-2zM645 483h2v1h-2zM650 488h1v36h-1zM648 488h2v1h-2zM651 510h2v1h-2zM656 498h1v39h-1zM654 498h2v1h-2zM657 517h2v1h-2zM662 499h1v49h-1zM660 507h2v1h-2zM663 524h2v1h-2zM668 516h1v75h-1zM666 516h2v1h-2zM669 563h2v1h-2zM674 539h1v58h-1zM672 539h2v1h-2zM675 566h2v1h-2zM680 490h1v63h-1zM678 552h2v1h-2zM681 519h2v1h-2zM686 490h1v47h-1zM684 536h2v1h-2zM687 504h2v1h-2zM692 479h1v43h-1zM690 521h2v1h-2zM693 494h2v1h-2zM698 469h1v39h-1zM696 507h2v1h-2zM699 476h2v1h-2zM704 469h1v64h-1zM702 469h2v1h-2zM705 501h2v1h-2zM710 496h1v37h-1zM708 496h2v1h-2zM711 519h2v1h-2zM716 488h1v36h-1zM714 507h2v1h-2zM717 503h2v1h-2zM722 487h1v35h-1zM720 506h2v1h-2zM723 503h2v1h-2zM728 482h1v51h-1zM726 504h2v1h-2zM729 503h2v1h-2zM734 451h1v53h-1zM732 503h2v1h-2zM735 471h2v1h-2zM740 460h1v29h-1zM738 488h2v1h-2zM741 472h2v1h-2zM746 465h1v22h-1zM744 479h2v1h-2zM747 477h2v1h-2zM752 471h1v28h-1zM750 478h2v1h-2zM753 485h2v1h-2zM758 481h1v33h-1zM756 481h2v1h-2zM759 494h2v1h-2z"/>
<rect x="741" y="146" width="1" height="481" fill="#ffff00"/>
<rect x="777" y="110" width="1" height="517" fill="#ff0000"/>
<rect x="807" y="110" width="1" height="517" fill="#ff80c0"/>
<rect x="843" y="110" width="1" height="517" fill="#8000ff"/>
<rect x="879" y="110" width="1" height="517" fill="#00ffff"/>
<rect x="945" y="110" width="1" height="517" fill="#0000ff"/>
<rect x="999" y="110" width="1" height="33" fill="#0000ff"/>
<rect x="1017" y="110" width="1" height="517" fill="#008000"/>
<rect x="1107" y="110" width="1" height="517" fill="#00ff00"/>
<rect x="741" y="110" width="1" height="36" fill="#ff00ff"/>
<rect x="777" y="485" width="1" height="13" fill="#ff00ff"/><rect x="777" y="512" width="1" height="10" fill="#ff00ff"/><rect x="879" y="569" width="1" height="13" fill="#0000ff"/>
<rect x="951" y="485" width="1" height="9" fill="#00ff00"/>
<rect x="1077" y="485" width="1" height="9" fill="#808000"/>
<rect x="981" y="570" width="1" height="10" fill="#808000"/>
<rect x="1113" y="570" width="1" height="10" fill="#800000"/>
<path fill="#00ffff" d="M728 148h1v9h-1zM727 149h1v1h-1zM726 150h1v1h-1zM732 148h5v1h-5zM736 148h1v5h-1zM732 152h5v1h-5zM732 152h1v5h-1zM732 156h5v1h-5zM739 148h5v1h-5zM743 148h1v5h-1zM743 152h1v5h-1zM739 156h5v1h-5zM739 152h1v5h-1zM739 148h1v5h-1zM746 148h5v1h-5zM750 148h1v5h-1zM750 152h1v5h-1zM746 156h5v1h-5zM746 148h1v5h-1zM746 152h5v1h-5zM721 158h5v1h-5zM725 158h1v5h-1zM721 162h5v1h-5zM721 162h1v5h-1zM721 166h5v1h-5zM728 165h2v2h-2zM732 158h5v1h-5zM736 158h1v5h-1zM736 162h1v5h-1zM732 166h5v1h-5zM732 162h1v5h-1zM732 158h1v5h-1zM739 158h5v1h-5zM743 158h1v5h-1zM743 162h1v5h-1zM739 166h5v1h-5zM739 162h1v5h-1zM739 158h1v5h-1zM746 158h5v1h-5zM750 158h1v5h-1zM750 162h1v5h-1zM746 166h5v1h-5zM746 162h1v5h-1zM746 158h1v5h-1z"/>
<path fill="#0000ff" d="M984 148h5v1h-5zM988 148h1v5h-1zM988 152h1v5h-1zM984 156h5v1h-5zM984 152h1v5h-1zM984 148h1v5h-1zM991 148h5v1h-5zM995 148h1v5h-1zM991 152h5v1h-5zM991 152h1v5h-1zM991 156h5v1h-5zM998 148h5v1h-5zM1002 148h1v5h-1zM1002 152h1v5h-1zM998 156h5v1h-5zM998 152h1v5h-1zM998 148h1v5h-1zM1005 148h5v1h-5zM1005 148h1v5h-1zM1005 152h5v1h-5zM1005 152h1v5h-1zM1009 152h1v5h-1zM1005 156h5v1h-5zM980 158h5v1h-5zM984 158h1v5h-1zM980 162h5v1h-5zM980 162h1v5h-1zM980 166h5v1h-5zM987 165h2v2h-2zM991 158h5v1h-5zM991 158h1v5h-1zM991 162h5v1h-5zM991 162h1v5h-1zM995 162h1v5h-1zM991 166h5v1h-5zM1001 158h1v9h-1zM1000 159h1v1h-1zM999 160h1v1h-1zM1005 158h5v1h-5zM1009 158h1v5h-1zM1009 162h1v5h-1zM1005 166h5v1h-5zM1005 162h1v5h-1zM1005 158h1v5h-1zM1005 162h5v1h-5z"/>
<path fill="#0000ff" d="M764 503h1v9h-1zM763 504h1v1h-1zM762 505h1v1h-1zM768 503h5v1h-5zM772 503h1v5h-1zM768 507h5v1h-5zM768 507h1v5h-1zM768 511h5v1h-5zM778 503h1v9h-1zM777 504h1v1h-1zM776 505h1v1h-1zM782 503h5v1h-5zM786 503h1v5h-1zM786 507h1v5h-1zM782 504h1v1h-1zM757 513h5v1h-5zM761 513h1v5h-1zM757 517h5v1h-5zM757 517h1v5h-1zM757 521h5v1h-5zM764 520h2v2h-2zM768 513h5v1h-5zM768 513h1v5h-1zM768 517h5v1h-5zM768 517h1v5h-1zM772 517h1v5h-1zM768 521h5v1h-5zM778 513h1v9h-1zM777 514h1v1h-1zM776 515h1v1h-1zM782 513h5v1h-5zM786 513h1v5h-1zM786 517h1v5h-1zM782 521h5v1h-5zM782 517h1v5h-1zM782 513h1v5h-1zM782 517h5v1h-5z"/>
<path fill="#00ff00" d="M935 503h5v1h-5zM939 503h1v5h-1zM939 507h1v5h-1zM935 511h5v1h-5zM935 507h1v5h-1zM935 503h1v5h-1zM945 503h1v9h-1zM944 504h1v1h-1zM943 505h1v1h-1zM949 503h5v1h-5zM953 503h1v5h-1zM949 507h5v1h-5zM949 507h1v5h-1zM949 511h5v1h-5zM956 503h5v1h-5zM960 503h1v5h-1zM960 507h1v5h-1zM956 504h1v1h-1zM931 513h1v5h-1zM931 517h5v1h-5zM935 513h1v5h-1zM935 517h1v5h-1zM938 520h2v2h-2zM942 513h5v1h-5zM946 513h1v5h-1zM942 517h5v1h-5zM942 517h1v5h-1zM942 521h5v1h-5zM949 513h5v1h-5zM953 513h1v5h-1zM949 517h5v1h-5zM953 517h1v5h-1zM949 521h5v1h-5zM956 513h5v1h-5zM956 513h1v5h-1zM956 517h5v1h-5zM956 517h1v5h-1zM960 517h1v5h-1zM956 521h5v1h-5z"/>
<path fill="#808000" d="M1062 503h5v1h-5zM1066 503h1v5h-1zM1066 507h1v5h-1zM1062 511h5v1h-5zM1062 507h1v5h-1zM1062 503h1v5h-1zM1069 503h5v1h-5zM1073 503h1v5h-1zM1069 507h5v1h-5zM1069 507h1v5h-1zM1069 511h5v1h-5zM1076 503h5v1h-5zM1080 503h1v5h-1zM1076 507h5v1h-5zM1076 507h1v5h-1zM1076 511h5v1h-5zM1083 503h5v1h-5zM1083 503h1v5h-1zM1083 507h5v1h-5zM1087 507h1v5h-1zM1083 511h5v1h-5zM1058 513h5v1h-5zM1058 513h1v5h-1zM1058 517h5v1h-5zM1062 517h1v5h-1zM1058 521h5v1h-5zM1065 520h2v2h-2zM1069 513h5v1h-5zM1073 513h1v5h-1zM1069 517h5v1h-5zM1073 517h1v5h-1zM1069 521h5v1h-5zM1076 513h5v1h-5zM1080 513h1v5h-1zM1080 517h1v5h-1zM1076 521h5v1h-5zM1076 517h1v5h-1zM1076 513h1v5h-1zM1076 517h5v1h-5zM1083 513h5v1h-5zM1087 513h1v5h-1zM1087 517h1v5h-1zM1083 521h5v1h-5zM1083 517h1v5h-1zM1083 513h1v5h-1zM1083 517h5v1h-5z"/>
<path fill="#00ff00" d="M864 587h5v1h-5zM868 587h1v5h-1zM868 591h1v5h-1zM864 595h5v1h-5zM864 591h1v5h-1zM864 587h1v5h-1zM874 587h1v9h-1zM873 588h1v1h-1zM872 589h1v1h-1zM878 587h5v1h-5zM882 587h1v5h-1zM882 591h1v5h-1zM878 595h5v1h-5zM878 591h1v5h-1zM878 587h1v5h-1zM885 587h5v1h-5zM889 587h1v5h-1zM889 591h1v5h-1zM885 595h5v1h-5zM885 587h1v5h-1zM885 591h5v1h-5zM860 597h1v5h-1zM860 601h5v1h-5zM864 597h1v5h-1zM864 601h1v5h-1zM867 604h2v2h-2zM871 597h5v1h-5zM875 597h1v5h-1zM871 601h5v1h-5zM871 601h1v5h-1zM871 605h5v1h-5zM878 597h5v1h-5zM882 597h1v5h-1zM878 601h5v1h-5zM882 601h1v5h-1zM878 605h5v1h-5zM885 597h5v1h-5zM885 597h1v5h-1zM885 601h5v1h-5zM885 601h1v5h-1zM889 601h1v5h-1zM885 605h5v1h-5z"/>
<path fill="#808000" d="M965 587h5v1h-5zM969 587h1v5h-1zM969 591h1v5h-1zM965 595h5v1h-5zM965 591h1v5h-1zM965 587h1v5h-1zM972 587h5v1h-5zM976 587h1v5h-1zM972 591h5v1h-5zM972 591h1v5h-1zM972 595h5v1h-5zM979 587h5v1h-5zM983 587h1v5h-1zM983 591h1v5h-1zM979 595h5v1h-5zM979 591h1v5h-1zM979 587h1v5h-1zM986 587h5v1h-5zM990 587h1v5h-1zM986 591h5v1h-5zM990 591h1v5h-1zM986 595h5v1h-5zM961 597h5v1h-5zM961 597h1v5h-1zM961 601h5v1h-5zM965 601h1v5h-1zM961 605h5v1h-5zM968 604h2v2h-2zM972 597h5v1h-5zM976 597h1v5h-1zM972 601h5v1h-5zM976 601h1v5h-1zM972 605h5v1h-5zM979 597h5v1h-5zM983 597h1v5h-1zM983 601h1v5h-1zM979 605h5v1h-5zM979 601h1v5h-1zM979 597h1v5h-1zM979 601h5v1h-5zM986 597h5v1h-5zM990 597h1v5h-1zM990 601h1v5h-1zM986 605h5v1h-5zM986 601h1v5h-1zM986 597h1v5h-1zM986 601h5v1h-5z"/>
<path fill="#800000" d="M1097 587h5v1h-5zM1101 587h1v5h-1zM1101 591h1v5h-1zM1097 595h5v1h-5zM1097 591h1v5h-1zM1097 587h1v5h-1zM1104 587h5v1h-5zM1108 587h1v5h-1zM1104 591h5v1h-5zM1108 591h1v5h-1zM1104 595h5v1h-5zM1111 587h5v1h-5zM1115 587h1v5h-1zM1115 591h1v5h-1zM1111 595h5v1h-5zM1111 591h1v5h-1zM1111 587h1v5h-1zM1118 587h5v1h-5zM1118 587h1v5h-1zM1118 591h5v1h-5zM1122 591h1v5h-1zM1118 595h5v1h-5zM1093 597h5v1h-5zM1093 597h1v5h-1zM1093 601h5v1h-5zM1093 601h1v5h-1zM1097 601h1v5h-1zM1093 605h5v1h-5zM1100 604h2v2h-2zM1104 597h5v1h-5zM1108 597h1v5h-1zM1108 601h1v5h-1zM1104 605h5v1h-5zM1104 601h1v5h-1zM1104 597h1v5h-1zM1104 601h5v1h-5zM1111 597h5v1h-5zM1111 597h1v5h-1zM1111 601h5v1h-5zM1115 601h1v5h-1zM1111 605h5v1h-5zM1118 597h1v5h-1zM1118 601h5v1h-5zM1122 597h1v5h-1zM1122 601h1v5h-1z"/>
<path fill="#ffff00" d="M728 629h1v9h-1zM727 630h1v1h-1zM726 631h1v1h-1zM732 629h5v1h-5zM736 629h1v5h-1zM732 633h5v1h-5zM732 633h1v5h-1zM732 637h5v1h-5zM739 629h5v1h-5zM743 629h1v5h-1zM743 633h1v5h-1zM739 637h5v1h-5zM739 633h1v5h-1zM739 629h1v5h-1zM746 629h5v1h-5zM750 629h1v5h-1zM750 633h1v5h-1zM746 637h5v1h-5zM746 629h1v5h-1zM746 633h5v1h-5zM721 639h5v1h-5zM725 639h1v5h-1zM725 643h1v5h-1zM721 647h5v1h-5zM721 643h1v5h-1zM721 639h1v5h-1zM728 646h2v2h-2zM732 639h5v1h-5zM732 639h1v5h-1zM732 643h5v1h-5zM732 643h1v5h-1zM736 643h1v5h-1zM732 647h5v1h-5zM742 639h1v9h-1zM741 640h1v1h-1zM740 641h1v1h-1zM746 639h5v1h-5zM750 639h1v5h-1zM750 643h1v5h-1zM746 647h5v1h-5zM746 643h1v5h-1zM746 639h1v5h-1zM746 643h5v1h-5z"/>
<path fill="#ff0000" d="M764 629h1v9h-1zM763 630h1v1h-1zM762 631h1v1h-1zM768 629h5v1h-5zM772 629h1v5h-1zM768 633h5v1h-5zM768 633h1v5h-1zM768 637h5v1h-5zM778 629h1v9h-1zM777 630h1v1h-1zM776 631h1v1h-1zM782 629h5v1h-5zM786 629h1v5h-1zM786 633h1v5h-1zM782 630h1v1h-1zM760 639h1v9h-1zM759 640h1v1h-1zM758 641h1v1h-1zM764 646h2v2h-2zM768 639h5v1h-5zM772 639h1v5h-1zM772 643h1v5h-1zM768 647h5v1h-5zM768 643h1v5h-1zM768 639h1v5h-1zM775 639h5v1h-5zM779 639h1v5h-1zM779 643h1v5h-1zM775 647h5v1h-5zM775 643h1v5h-1zM775 639h1v5h-1zM782 639h5v1h-5zM786 639h1v5h-1zM786 643h1v5h-1zM782 647h5v1h-5zM782 643h1v5h-1zM782 639h1v5h-1z"/>
<path fill="#ff80c0" d="M794 629h1v9h-1zM793 630h1v1h-1zM792 631h1v1h-1zM798 629h5v1h-5zM802 629h1v5h-1zM798 633h5v1h-5zM798 633h1v5h-1zM798 637h5v1h-5zM805 629h5v1h-5zM809 629h1v5h-1zM805 633h5v1h-5zM805 633h1v5h-1zM805 637h5v1h-5zM812 629h1v5h-1zM812 633h5v1h-5zM816 629h1v5h-1zM816 633h1v5h-1zM790 639h1v9h-1zM789 640h1v1h-1zM788 641h1v1h-1zM794 646h2v2h-2zM798 639h5v1h-5zM802 639h1v5h-1zM798 643h5v1h-5zM798 643h1v5h-1zM798 647h5v1h-5zM805 639h5v1h-5zM809 639h1v5h-1zM809 643h1v5h-1zM805 640h1v1h-1zM812 639h5v1h-5zM816 639h1v5h-1zM812 643h5v1h-5zM812 643h1v5h-1zM812 647h5v1h-5z"/>
<path fill="#8000ff" d="M827 629h5v1h-5zM831 629h1v5h-1zM831 633h1v5h-1zM827 637h5v1h-5zM827 633h1v5h-1zM827 629h1v5h-1zM837 629h1v9h-1zM836 630h1v1h-1zM835 631h1v1h-1zM841 629h5v1h-5zM845 629h1v5h-1zM845 633h1v5h-1zM841 637h5v1h-5zM841 633h1v5h-1zM841 629h1v5h-1zM851 629h1v9h-1zM850 630h1v1h-1zM849 631h1v1h-1zM826 639h1v9h-1zM825 640h1v1h-1zM824 641h1v1h-1zM830 646h2v2h-2zM834 639h5v1h-5zM834 639h1v5h-1zM834 643h5v1h-5zM834 643h1v5h-1zM838 643h1v5h-1zM834 647h5v1h-5zM844 639h1v9h-1zM843 640h1v1h-1zM842 641h1v1h-1zM848 639h5v1h-5zM852 639h1v5h-1zM852 643h1v5h-1zM848 647h5v1h-5zM848 643h1v5h-1zM848 639h1v5h-1zM848 643h5v1h-5z"/>
<path fill="#00ffff" d="M863 629h5v1h-5zM867 629h1v5h-1zM867 633h1v5h-1zM863 637h5v1h-5zM863 633h1v5h-1zM863 629h1v5h-1zM873 629h1v9h-1zM872 630h1v1h-1zM871 631h1v1h-1zM877 629h5v1h-5zM881 629h1v5h-1zM881 633h1v5h-1zM877 637h5v1h-5zM877 633h1v5h-1zM877 629h1v5h-1zM884 629h5v1h-5zM888 629h1v5h-1zM888 633h1v5h-1zM884 637h5v1h-5zM884 629h1v5h-1zM884 633h5v1h-5zM859 639h5v1h-5zM863 639h1v5h-1zM859 643h5v1h-5zM859 643h1v5h-1zM859 647h5v1h-5zM866 646h2v2h-2zM870 639h5v1h-5zM874 639h1v5h-1zM874 643h1v5h-1zM870 647h5v1h-5zM870 643h1v5h-1zM870 639h1v5h-1zM877 639h5v1h-5zM881 639h1v5h-1zM881 643h1v5h-1zM877 647h5v1h-5zM877 643h1v5h-1zM877 639h1v5h-1zM884 639h5v1h-5zM888 639h1v5h-1zM888 643h1v5h-1zM884 647h5v1h-5zM884 643h1v5h-1zM884 639h1v5h-1z"/>
<path fill="#0000ff" d="M929 629h5v1h-5zM933 629h1v5h-1zM933 633h1v5h-1zM929 637h5v1h-5zM929 633h1v5h-1zM929 629h1v5h-1zM939 629h1v9h-1zM938 630h1v1h-1zM937 631h1v1h-1zM943 629h5v1h-5zM947 629h1v5h-1zM943 633h5v1h-5zM943 633h1v5h-1zM943 637h5v1h-5zM950 629h5v1h-5zM950 629h1v5h-1zM950 633h5v1h-5zM950 633h1v5h-1zM954 633h1v5h-1zM950 637h5v1h-5zM925 639h5v1h-5zM929 639h1v5h-1zM925 643h5v1h-5zM925 643h1v5h-1zM925 647h5v1h-5zM932 646h2v2h-2zM936 639h5v1h-5zM936 639h1v5h-1zM936 643h5v1h-5zM936 643h1v5h-1zM940 643h1v5h-1zM936 647h5v1h-5zM946 639h1v9h-1zM945 640h1v1h-1zM944 641h1v1h-1zM950 639h5v1h-5zM954 639h1v5h-1zM954 643h1v5h-1zM950 647h5v1h-5zM950 643h1v5h-1zM950 639h1v5h-1zM950 643h5v1h-5z"/>
<path fill="#008000" d="M1001 629h5v1h-5zM1005 629h1v5h-1zM1005 633h1v5h-1zM1001 637h5v1h-5zM1001 633h1v5h-1zM1001 629h1v5h-1zM1008 629h5v1h-5zM1012 629h1v5h-1zM1008 633h5v1h-5zM1008 633h1v5h-1zM1008 637h5v1h-5zM1018 629h1v9h-1zM1017 630h1v1h-1zM1016 631h1v1h-1zM1025 629h1v9h-1zM1024 630h1v1h-1zM1023 631h1v1h-1zM997 639h5v1h-5zM1001 639h1v5h-1zM997 643h5v1h-5zM1001 643h1v5h-1zM997 647h5v1h-5zM1004 646h2v2h-2zM1008 639h5v1h-5zM1012 639h1v5h-1zM1008 643h5v1h-5zM1012 643h1v5h-1zM1008 647h5v1h-5zM1015 639h5v1h-5zM1019 639h1v5h-1zM1015 643h5v1h-5zM1019 643h1v5h-1zM1015 647h5v1h-5zM1022 639h5v1h-5zM1026 639h1v5h-1zM1026 643h1v5h-1zM1022 647h5v1h-5zM1022 643h1v5h-1zM1022 639h1v5h-1z"/>
<path fill="#00ff00" d="M1091 629h5v1h-5zM1095 629h1v5h-1zM1095 633h1v5h-1zM1091 637h5v1h-5zM1091 633h1v5h-1zM1091 629h1v5h-1zM1098 629h5v1h-5zM1102 629h1v5h-1zM1098 633h5v1h-5zM1102 633h1v5h-1zM1098 637h5v1h-5zM1105 629h5v1h-5zM1109 629h1v5h-1zM1109 633h1v5h-1zM1105 637h5v1h-5zM1105 633h1v5h-1zM1105 629h1v5h-1zM1112 629h1v5h-1zM1112 633h5v1h-5zM1116 629h1v5h-1zM1116 633h1v5h-1zM1087 639h1v5h-1zM1087 643h5v1h-5zM1091 639h1v5h-1zM1091 643h1v5h-1zM1094 646h2v2h-2zM1098 639h5v1h-5zM1102 639h1v5h-1zM1098 643h5v1h-5zM1098 643h1v5h-1zM1098 647h5v1h-5zM1105 639h5v1h-5zM1109 639h1v5h-1zM1105 643h5v1h-5zM1109 643h1v5h-1zM1105 647h5v1h-5zM1112 639h5v1h-5zM1112 639h1v5h-1zM1112 643h5v1h-5zM1112 643h1v5h-1zM1116 643h1v5h-1zM1112 647h5v1h-5z"/>
<path fill="#c0c0c0" d="M107 503h5v1h-5zM111 503h1v5h-1zM111 507h1v5h-1zM107 511h5v1h-5zM107 507h1v5h-1zM107 503h1v5h-1zM114 503h5v1h-5zM118 503h1v5h-1zM118 507h1v5h-1zM114 504h1v1h-1zM124 503h1v9h-1zM123 504h1v1h-1zM122 505h1v1h-1zM128 503h5v1h-5zM128 503h1v5h-1zM128 507h5v1h-5zM132 507h1v5h-1zM128 511h5v1h-5z"/>
<path fill="#c0c0c0" d="M214 503h5v1h-5zM218 503h1v5h-1zM218 507h1v5h-1zM214 511h5v1h-5zM214 507h1v5h-1zM214 503h1v5h-1zM221 503h5v1h-5zM225 503h1v5h-1zM225 507h1v5h-1zM221 511h5v1h-5zM221 507h1v5h-1zM221 503h1v5h-1zM221 507h5v1h-5zM228 503h5v1h-5zM232 503h1v5h-1zM232 507h1v5h-1zM228 511h5v1h-5zM228 507h1v5h-1zM228 503h1v5h-1zM235 503h5v1h-5zM239 503h1v5h-1zM239 507h1v5h-1zM235 511h5v1h-5zM235 507h1v5h-1zM235 503h1v5h-1zM235 507h5v1h-5z"/>
<path fill="#c0c0c0" d="M221 587h5v1h-5zM225 587h1v5h-1zM225 591h1v5h-1zM221 595h5v1h-5zM221 591h1v5h-1zM221 587h1v5h-1zM228 587h5v1h-5zM232 587h1v5h-1zM232 591h1v5h-1zM228 595h5v1h-5zM228 591h1v5h-1zM228 587h1v5h-1zM228 591h5v1h-5zM238 587h1v9h-1zM237 588h1v1h-1zM236 589h1v1h-1zM245 587h1v9h-1zM244 588h1v1h-1zM243 589h1v1h-1z"/>
<path fill="#c0c0c0" d="M311 587h5v1h-5zM315 587h1v5h-1zM315 591h1v5h-1zM311 595h5v1h-5zM311 591h1v5h-1zM311 587h1v5h-1zM318 587h5v1h-5zM322 587h1v5h-1zM322 591h1v5h-1zM318 595h5v1h-5zM318 587h1v5h-1zM318 591h5v1h-5zM325 587h5v1h-5zM329 587h1v5h-1zM329 591h1v5h-1zM325 595h5v1h-5zM325 591h1v5h-1zM325 587h1v5h-1zM332 587h5v1h-5zM336 587h1v5h-1zM332 591h5v1h-5zM332 591h1v5h-1zM332 595h5v1h-5z"/>
<path fill="#c0c0c0" d="M482 503h1v9h-1zM481 504h1v1h-1zM480 505h1v1h-1zM486 503h5v1h-5zM490 503h1v5h-1zM490 507h1v5h-1zM486 511h5v1h-5zM486 507h1v5h-1zM486 503h1v5h-1zM495 504h1v1h-1zM494 505h1v1h-1zM500 503h5v1h-5zM504 503h1v5h-1zM504 507h1v5h-1zM500 511h5v1h-5zM500 507h1v5h-1zM500 503h1v5h-1z"/>
<path fill="#c0c0c0" d="M482 587h1v9h-1zM481 588h1v1h-1zM480 589h1v1h-1zM486 587h5v1h-5zM490 587h1v5h-1zM490 591h1v5h-1zM486 595h5v1h-5zM486 591h1v5h-1zM486 587h1v5h-1zM495 588h1v1h-1zM494 589h1v1h-1zM500 587h5v1h-5zM504 587h1v5h-1zM504 591h1v5h-1zM500 595h5v1h-5zM500 591h1v5h-1zM500 587h1v5h-1z"/>
<path fill="#c0c0c0" d="M483 629h1v9h-1zM482 630h1v1h-1zM481 631h1v1h-1zM487 629h5v1h-5zM491 629h1v5h-1zM491 633h1v5h-1zM487 637h5v1h-5zM487 633h1v5h-1zM487 629h1v5h-1zM497 629h1v9h-1zM496 630h1v1h-1zM495 631h1v1h-1zM501 629h5v1h-5zM505 629h1v5h-1zM505 633h1v5h-1zM501 637h5v1h-5zM501 633h1v5h-1zM501 629h1v5h-1z"/>
<path fill="#c0c0c0" d="M585 629h1v9h-1zM584 630h1v1h-1zM583 631h1v1h-1zM592 629h1v9h-1zM591 630h1v1h-1zM590 631h1v1h-1zM596 629h5v1h-5zM600 629h1v5h-1zM600 633h1v5h-1zM596 637h5v1h-5zM596 633h1v5h-1zM596 629h1v5h-1zM603 629h1v5h-1zM603 633h5v1h-5zM607 629h1v5h-1zM607 633h1v5h-1z"/>
<path fill="#c0c0c0" d="M663 629h1v9h-1zM662 630h1v1h-1zM661 631h1v1h-1zM670 629h1v9h-1zM669 630h1v1h-1zM668 631h1v1h-1zM674 629h5v1h-5zM678 629h1v5h-1zM674 633h5v1h-5zM674 633h1v5h-1zM674 637h5v1h-5zM684 629h1v9h-1zM683 630h1v1h-1zM682 631h1v1h-1z"/>
<rect x="1188" y="110" width="9" height="15" fill="#00ff00"/>
<rect x="1188" y="117" width="9" height="8" fill="#008000"/><rect x="1189" y="118" width="7" height="6" fill="#fff"/><rect x="1190" y="119" width="5" height="4" fill="#000"/><rect x="1191" y="120" width="3" height="2" fill="#fff"/>
<rect x="1188" y="413" width="9" height="13" fill="#008000"/><rect x="1189" y="414" width="7" height="11" fill="#fff"/><path d="M1191 416h3v1h1v1h1v3h-1v1h-1v1h-3v-1h-1v-1h-1v-3h1v-1h1zM1191 417v1h-1v3h1v1h3v-1h1v-3h-1v-1z" fill="#000" fill-rule="evenodd"/>
<rect x="1188" y="720" width="9" height="9" fill="#00ff00"/>
<text x="35" y="121" font-family="Liberation Sans" font-size="10" fill="#fff" textLength="180" lengthAdjust="spacingAndGlyphs">FIBONACCI/GALACTIC TRADER(TM) Trial</text>
<text x="229" y="121" font-family="Liberation Sans" font-size="10" fill="#fff" textLength="177" lengthAdjust="spacingAndGlyphs">DOW JONES INDUSTRIAL D- W- M EOD</text>
<clipPath id="cp"><rect x="1198" y="107" width="53" height="640"/></clipPath>
<g clip-path="url(#cp)" font-family="Liberation Sans" font-size="11" fill="#fff">
<text x="1210" y="181">12000.00</text>
<text x="1210" y="273">11000.00</text>
<text x="1210" y="365">10000.00</text>
<text x="1210" y="456">9000.00</text>
<text x="1210" y="548">8000.00</text>
<text x="1210" y="640">7000.00</text>
<text x="1210" y="732">6000.00</text>
</g>
<rect x="1199" y="480" width="52" height="14" fill="#fff"/>
<text x="1206" y="491" font-family="Liberation Sans" font-size="11" fill="#000">8629.68</text>
<g font-family="Liberation Sans" font-size="11" fill="#fff">
<text x="35" y="743">2008-06-24</text>
<text x="113" y="743">2008-07-14</text>
<text x="191" y="743">2008-07-31</text>
<text x="269" y="743">2008-08-19</text>
<text x="347" y="743">2008-09-08</text>
<text x="425" y="743">2008-09-25</text>
<text x="503" y="743">2008-10-14</text>
<text x="581" y="743">2008-10-31</text>
<text x="659" y="743">2008-11-19</text>
<text x="737" y="743">2008-12-09</text>
<text x="815" y="743">2008-12-26</text>
<text x="893" y="743">2009-01-14</text>
<text x="971" y="743">2009-02-02</text>
<text x="1049" y="743">2009-02-19</text>
<text x="1127" y="743">2009-03-10</text>
</g>
<rect x="1233" y="732" width="17" height="14" fill="#c0c0c0"/><text x="1237" y="744" font-family="Liberation Sans" font-size="11" fill="#000" textLength="10" lengthAdjust="spacingAndGlyphs">TF</text>
<rect x="763" y="727" width="4" height="6" fill="#ffff00"/><rect x="763" y="729" width="4" height="1" fill="#fff"/></svg>
<svg class="a" style="left:0;top:0" width="1280" height="800" shape-rendering="crispEdges"><path d="M11 123v12l3-3 3 5 2-1-3-5h4z" fill="#000"/><rect x="6" y="153" width="18" height="2" fill="#000"/><rect x="14" y="145" width="2" height="18" fill="#000"/><rect x="7" y="170" width="16" height="16" fill="#c4c4c4"/><path d="M11 173h8v3h-5v4h5v3h-8z" fill="#000"/><rect x="17" y="174" width="2" height="2" fill="#f00"/><rect x="17" y="181" width="2" height="2" fill="#f00"/><path d="M9 199l5-5 9 9-5 5z" fill="#00e0f0" stroke="#000" stroke-width="1" shape-rendering="geometricPrecision"/><path d="M9 199l5-5 3 3-5 5z" fill="#808000" stroke="#000" shape-rendering="geometricPrecision"/><path d="M15 204l4-4" stroke="#fff"/><rect x="3" y="216" width="24" height="1" fill="#d0d0d0"/><g shape-rendering="geometricPrecision"><rect x="7.5" y="228.5" width="9" height="11" fill="#e0e0e0" stroke="#000"/><circle cx="15" cy="231" r="4.5" fill="#fff" stroke="#000" stroke-width="1.3"/><path d="M12 230h5M12 232h4" stroke="#00c0e0"/><path d="M18 234l5 5" stroke="#000" stroke-width="2"/></g><g shape-rendering="geometricPrecision" opacity=".45"><rect x="7.5" y="252.5" width="9" height="11" fill="#bbb" stroke="#888"/><circle cx="15" cy="255" r="4.5" fill="#999" stroke="#888" stroke-width="1.3"/><path d="M18 258l5 5" stroke="#888" stroke-width="2"/></g><rect x="3" y="270" width="24" height="1" fill="#d0d0d0"/><rect x="9" y="278" width="14" height="2" fill="#000"/><path d="M8 280 l3-2 12 12-3 3z" fill="#00d000" stroke="#000" shape-rendering="geometricPrecision"/><rect x="9" y="302" width="14" height="2" fill="#000"/><path d="M8 304 l3-2 12 12-3 3z" fill="#0000d0" stroke="#000" shape-rendering="geometricPrecision"/><rect x="8" y="327" width="2" height="15" fill="#000"/><path d="M9 328l3-2 11 11-3 3z" fill="#0000d0" stroke="#000" shape-rendering="geometricPrecision"/><path d="M7 363l12-12" stroke="#000" stroke-width="1.3" shape-rendering="geometricPrecision"/><rect x="17.5" y="355.5" width="4" height="10" fill="#00e8f0" stroke="#000"/><rect x="19" y="351" width="1" height="4" fill="#ffd000"/><rect x="3" y="373" width="24" height="1" fill="#d0d0d0"/><text x="7" y="392" font-family="Liberation Sans" font-size="12" fill="#000" font-weight="normal" textLength="17" lengthAdjust="spacingAndGlyphs">abc</text><text x="7" y="416" font-family="Liberation Sans" font-size="12" fill="#000" font-weight="normal" textLength="17" lengthAdjust="spacingAndGlyphs">abc</text><path d="M8 404l15 12M8 416l15-12" stroke="#f00" stroke-width="1.2" shape-rendering="geometricPrecision"/><text x="10" y="441" font-family="Liberation Sans" font-size="12" fill="#00f" font-weight="bold" >F</text><rect x="3" y="450" width="24" height="1" fill="#d0d0d0"/><g fill="none" stroke="#000" stroke-width="1.6" shape-rendering="geometricPrecision"><circle cx="15" cy="466" r="7.2"/><ellipse cx="15" cy="490.5" rx="8.3" ry="5.8"/></g><rect x="6" y="506" width="18" height="1" fill="#00ffff"/><rect x="6" y="509" width="18" height="1" fill="#00ff00"/><rect x="6" y="511" width="18" height="1" fill="#f00"/><rect x="6" y="512" width="18" height="1" fill="#f00"/><rect x="6" y="516" width="18" height="1" fill="#00f"/><rect x="6" y="517" width="18" height="1" fill="#00f"/><rect x="6" y="520" width="18" height="1" fill="#f0f"/><path d="M6 570v6l-3-3z" fill="#000"/><text x="1256" y="137.5" font-family="Liberation Mono" font-size="17" fill="#000" font-weight="bold" textLength="13" lengthAdjust="spacingAndGlyphs">A</text><path d="M1264 124l11 6" stroke="#f00" stroke-width="1.6" shape-rendering="geometricPrecision"/><path d="M1258 145l17 17" stroke-width="1.2" shape-rendering="geometricPrecision" stroke="#000"/><path d="M1258 145l17 7" stroke="#f00" stroke-width="1.5" shape-rendering="geometricPrecision"/><path d="M1258 146l8 16" stroke="#0f0" stroke-width="1.5" shape-rendering="geometricPrecision"/><g fill="none" shape-rendering="geometricPrecision"><path d="M1258 174a8 8 0 0 0 17 0" stroke="#000" stroke-width="1.3"/><path d="M1260 173a6.5 6 0 0 0 13 0" stroke="#f0f"/><path d="M1262 173a4.5 4 0 0 0 9 0" stroke="#0c0"/><path d="M1257 184l10-11" stroke="#000"/></g><text x="1258" y="207" font-family="Liberation Sans" font-size="12" fill="#000080" font-weight="bold" >DL</text><g shape-rendering="geometricPrecision" fill="none"><path d="M1257 224l7-7M1275 217l-12 12 -3 3M1269 234l6-6" stroke="#000" stroke-width="1.2"/><path d="M1258 222l9 10" stroke="#666" stroke-width="1.3"/></g><rect x="1257" y="243" width="6" height="2" fill="#000"/><rect x="1259" y="243" width="2" height="15" fill="#000"/><rect x="1257" y="256" width="6" height="2" fill="#000"/><g shape-rendering="geometricPrecision" fill="none"><path d="M1263 248l9 9" stroke="#000" stroke-width="1.4"/><path d="M1265 249h10" stroke="#f00"/><path d="M1268 252h7" stroke="#00f"/><path d="M1271 256h4" stroke="#0a0"/></g><rect x="1258" y="267" width="16" height="1" fill="#000"/><rect x="1258" y="269" width="16" height="1" fill="#000"/><rect x="1258" y="273" width="16" height="1" fill="#000"/><rect x="1258" y="280" width="16" height="1" fill="#000"/><g shape-rendering="geometricPrecision" stroke="#f00" stroke-width="1.1"><path d="M1257 294l7 12M1260 291l6 10M1262 289l5 8"/></g><rect x="1268" y="296" width="7" height="1" fill="#000"/><rect x="1268" y="300" width="7" height="1" fill="#000"/><rect x="1268" y="304" width="7" height="1" fill="#000"/><rect x="1258" y="315" width="1" height="14" fill="#00f"/><rect x="1260" y="315" width="1" height="14" fill="#00f"/><rect x="1263" y="315" width="1" height="14" fill="#00f"/><rect x="1267" y="315" width="1" height="14" fill="#00f"/><rect x="1272" y="315" width="1" height="14" fill="#00f"/><rect x="1258" y="339" width="1" height="14" fill="#f00"/><rect x="1260" y="339" width="1" height="14" fill="#f00"/><rect x="1264" y="339" width="1" height="1" fill="#000"/><rect x="1264" y="341" width="1" height="1" fill="#000"/><rect x="1264" y="343" width="1" height="1" fill="#000"/><rect x="1264" y="345" width="1" height="1" fill="#000"/><rect x="1264" y="347" width="1" height="1" fill="#000"/><rect x="1264" y="349" width="1" height="1" fill="#000"/><rect x="1264" y="351" width="1" height="1" fill="#000"/><rect x="1268" y="339" width="1" height="14" fill="#008000"/><rect x="1270" y="339" width="1" height="14" fill="#008000"/><rect x="1273" y="339" width="1" height="14" fill="#008000"/><rect x="1258" y="362" width="1" height="15" fill="#f00"/><rect x="1263" y="362" width="1" height="15" fill="#f00"/><rect x="1268" y="362" width="1" height="15" fill="#f00"/><rect x="1273" y="362" width="1" height="15" fill="#f00"/><path d="M1257 399l4-14" stroke="#008000" stroke-width="1.2" shape-rendering="geometricPrecision"/><rect x="1268" y="389" width="2" height="2" fill="#00f"/><rect x="1273" y="389" width="2" height="2" fill="#00f"/><rect x="1263" y="394" width="2" height="2" fill="#00f"/><rect x="1273" y="394" width="2" height="2" fill="#00f"/><rect x="1263" y="399" width="2" height="2" fill="#00f"/><rect x="1268" y="399" width="2" height="2" fill="#00f"/><rect x="1262.5" y="388.5" width="3" height="3" fill="none" stroke="#f00"/><rect x="1267.5" y="393.5" width="3" height="3" fill="none" stroke="#f00"/><rect x="1272.5" y="398.5" width="3" height="3" fill="none" stroke="#f00"/><g shape-rendering="geometricPrecision" stroke="#00f" stroke-width="1.2" fill="none"><path d="M1257 425l2-5M1261 422l2-5M1265 419l2-5M1269 416l2-5"/><path d="M1258 423h2M1262 420h2M1266 417h2"/></g><rect x="1268" y="409" width="7" height="4" fill="#f00"/><rect x="1269" y="410" width="5" height="2" fill="#000"/><rect x="1270" y="416" width="5" height="5" fill="#f00"/><rect x="1271" y="417" width="3" height="3" fill="#000"/><path d="M1260 441l8-8M1270 440l5-5M1261 449l14-14" stroke="#000" stroke-width="1.1" shape-rendering="geometricPrecision"/><path d="M1259 472l7-13" stroke="#00f" stroke-width="1.2" shape-rendering="geometricPrecision"/><path d="M1266 459v13h-7" stroke="#800000" stroke-dasharray="1 1" fill="none"/><path d="M1267 472l4-9" stroke="#000" shape-rendering="geometricPrecision"/><path d="M1271 463l3-5" stroke="#000" shape-rendering="geometricPrecision"/><rect x="1257" y="483" width="18" height="1" fill="#00f"/><rect x="1257" y="487" width="18" height="1" fill="#f00"/><rect x="1257" y="491" width="18" height="1" fill="#00f"/><rect x="1257" y="495" width="18" height="1" fill="#f00"/><text x="1259" y="496" font-family="Liberation Sans" font-size="15" fill="#008000" font-weight="bold" >G</text><g shape-rendering="geometricPrecision" stroke="#000" stroke-width="1" fill="none"><path d="M1260 521l6-14M1260 521l9-13M1260 521l12-12M1260 521l14-8M1260 521l14-4"/></g><circle cx="1261" cy="520" r="2" fill="#000"/><path d="M1263.5 533.5h-5v10h5v-4h-2" fill="none" stroke="#800080" shape-rendering="geometricPrecision" stroke-linejoin="round"/><path d="M1272.5 538.5h-5v-5h5v10h-5" fill="none" stroke="#008000" shape-rendering="geometricPrecision" stroke-linejoin="round"/><path d="M1263.5 557.5h-5v10h5v-4h-2" fill="none" stroke="#800080" shape-rendering="geometricPrecision" stroke-linejoin="round"/><path d="M1272.5 557.5h-5v5h5v5h-5" fill="none" stroke="#800080" shape-rendering="geometricPrecision" stroke-linejoin="round"/><text x="1258" y="592" font-family="Liberation Sans" font-size="13" fill="#000" font-weight="bold" >LS</text><text x="1260" y="616" font-family="Liberation Sans" font-size="13" fill="#000" font-weight="bold" >Bi</text><path d="M1259 667v6l-3-3z" fill="#000"/></svg>
<div class="a" style="left:29px;top:747px;width:1222px;height:1px;background:#a0a0a0"></div>
<div class="a" style="left:29px;top:748px;width:1222px;height:2px;background:#fff"></div>
<div class="a" style="left:34px;top:751px;width:157px;height:17px;border-top:1px solid #808080;border-left:1px solid #808080;border-right:1px solid #fff;border-bottom:1px solid #fff;box-shadow:inset 0 -1px #e3e3e3"></div>
<div class="a" style="left:847px;top:751px;width:404px;height:17px;border-top:1px solid #808080;border-left:1px solid #808080;border-bottom:1px solid #fff;box-shadow:inset 0 -1px #e3e3e3"></div>
<div class="a" style="left:29px;top:747px;width:1px;height:22px;background:#808080"></div>
<div class="a" style="left:1250px;top:747px;width:1px;height:22px;background:#808080"></div>
<div class="a" style="left:29px;top:768px;width:1222px;height:1px;background:#505050"></div>
<div class="a" style="left:0;top:769px;width:1280px;height:31px;background:linear-gradient(180deg,#2e3135 0,#2e3135 1px,#73777c 1px,#65696e 3px,#484c51 9px,#34383c 15px,#0c0f13 16px,#080b0f 100%)"></div><svg class="a" style="left:0;top:0" width="1280" height="800"><defs><radialGradient id="orb" cx=".5" cy=".35" r=".6"><stop offset="0" stop-color="#7fb6d8"/><stop offset=".6" stop-color="#2a6d99"/><stop offset="1" stop-color="#0b3556"/></radialGradient>
<linearGradient id="btn" x1="0" y1="0" x2="0" y2="1"><stop offset="0" stop-color="#6a6e73"/><stop offset=".5" stop-color="#44484c"/><stop offset=".52" stop-color="#16191c"/><stop offset="1" stop-color="#1c1f22"/></linearGradient>
<linearGradient id="btna" x1="0" y1="0" x2="0" y2="1"><stop offset="0" stop-color="#2a2c2f"/><stop offset="1" stop-color="#0a0b0c"/></linearGradient></defs><circle cx="30" cy="785" r="20" fill="#1a1f24"/><circle cx="30" cy="785" r="18" fill="url(#orb)" stroke="#0a1a28"/><path d="M20 778q4-3 9-1l-2 7q-4-2-9 0z" fill="#f25022"/><path d="M30 777q5 2 9-1l-2 7q-4 3-9 1z" fill="#7fba00"/><path d="M18 785q4-2 9 0l-2 7q-4-2-9 0z" fill="#01a4ef"/><path d="M28 785q4 2 9-1l-2 7q-4 3-9 1z" fill="#ffb902"/><rect x="65.5" y="779.5" width="15" height="12" fill="#3a78c8" stroke="#c8d4e0"/><rect x="66" y="788" width="14" height="3" fill="#222"/><rect x="88.5" y="779.5" width="15" height="12" fill="#1a3a8a" stroke="#c8d4e0"/><rect x="91" y="782" width="6" height="3" fill="#cde"/><rect x="94" y="785" width="6" height="3" fill="#cde"/><rect x="97" y="787" width="5" height="3" fill="#fff"/><rect x="113" y="778" width="14" height="4" fill="#f0a030"/><rect x="112" y="781" width="15" height="11" fill="#e8eef4"/><path d="M115 792v-5h9v5h-2v-3h-5v3z" fill="#3aa0a8"/><text x="136.5" y="791" font-family="Liberation Sans" font-size="17" font-weight="bold" fill="#1e8ee8">e</text><ellipse cx="143" cy="785" rx="8.5" ry="4" transform="rotate(-40 143 785)" fill="none" stroke="#f0b020" stroke-width="1.4"/><circle cx="165" cy="784.5" r="7" fill="#2a5aa8"/><path d="M158 786q0-8 7-8.5q-3 2-2 4q4-1 6 3q1 4-3 6q3-4 0-5q-2 3-5 1q1 4 5 5q-7 1-8-5.5z" fill="#e86a1a"/><rect x="183" y="779" width="13" height="10" fill="#2040d0" stroke="#c0c8d0"/><rect x="186" y="790" width="8" height="2" fill="#b0b8c0"/><rect x="181" y="784" width="1" height="8" fill="#888"/><rect x="203" y="778" width="16" height="15" fill="#3aa0d0"/><circle cx="211" cy="785.5" r="6" fill="#f09020"/><path d="M209 782v7l5-3.5z" fill="#fff"/><rect x="229" y="778" width="12" height="14" rx="3" fill="#f4f4f0"/><text x="231" y="788" font-family="Liberation Sans" font-size="9" font-weight="bold" fill="#000">B</text><rect x="231" y="790" width="10" height="2" fill="#3040a0"/><path d="M250 779h6l2 2v11h-8z" fill="#e8d070"/><rect x="253" y="781" width="10" height="11" fill="#f0dc88"/><path d="M274 779h13l-1 13h-13z" fill="#c8dcf0" stroke="#8a9aa8"/><rect x="275" y="778" width="11" height="2" fill="#a8b8c8"/><path d="M296 779h13l-2 13h-9z" fill="#b8d0e8" stroke="#90a8c0"/><circle cx="302" cy="786" r="3" fill="#5aa0e0"/><path d="M318 784l7-7 8 2 1 7-7 7-8-2z" fill="#222" transform="rotate(0 326 785)"/><path d="M326 785L326.00 780.00A5 5 0 0 1 330.33 782.50z" fill="#ff2020"/><path d="M326 785L330.33 782.50A5 5 0 0 1 330.33 787.50z" fill="#ffd000"/><path d="M326 785L330.33 787.50A5 5 0 0 1 326.00 790.00z" fill="#20d020"/><path d="M326 785L326.00 790.00A5 5 0 0 1 321.67 787.50z" fill="#00c8ff"/><path d="M326 785L321.67 787.50A5 5 0 0 1 321.67 782.50z" fill="#2040ff"/><path d="M326 785L321.67 782.50A5 5 0 0 1 326.00 780.00z" fill="#e020e0"/><circle cx="349" cy="785" r="7.5" fill="#e8e8e8"/><circle cx="349" cy="785" r="6" fill="#d82020"/><path d="M346 787q3-6 6 0z" fill="#fff"/><path d="M364 784l6-1 2-5 1 4 6-2-5 5 1 4-3 6-2-4-5 3 2-5z" fill="#0010ff"/><text x="387" y="786" font-family="Liberation Serif" font-size="10" font-weight="bold" fill="#e00000">MS</text><rect x="389" y="786" width="12" height="5" fill="#222"/><rect x="1279" y="771" width="1" height="29" fill="#666"/><rect x="432.5" y="772.5" width="155" height="26" rx="3" fill="url(#btna)" stroke="#5a5d60"/><rect x="590.5" y="772.5" width="155" height="26" rx="3" fill="url(#btn)" stroke="#3c3f42"/><rect x="591.5" y="773.5" width="153" height="24" rx="2" fill="none" stroke="#7a7e82" stroke-opacity=".5"/><rect x="748.5" y="772.5" width="155" height="26" rx="3" fill="url(#btn)" stroke="#3c3f42"/><rect x="749.5" y="773.5" width="153" height="24" rx="2" fill="none" stroke="#7a7e82" stroke-opacity=".5"/><rect x="906.5" y="772.5" width="155" height="26" rx="3" fill="url(#btn)" stroke="#3c3f42"/><rect x="907.5" y="773.5" width="153" height="24" rx="2" fill="none" stroke="#7a7e82" stroke-opacity=".5"/><rect x="442" y="778" width="14" height="14" fill="#fff" stroke="#666"/><text x="443" y="786" font-family="Liberation Sans" font-size="8" font-weight="bold" fill="#000">FT</text><text x="448" y="792" font-family="Liberation Sans" font-size="7" font-weight="bold" fill="#00f">4</text><rect x="599" y="777" width="15" height="15" fill="#000"/><ellipse cx="606.5" cy="784.5" rx="6" ry="4.5" fill="#90b8e0"/><path d="M599 790l6-5 3 1 6-6" stroke="#0020ff" fill="none"/><rect x="757" y="777" width="11" height="11" fill="#3060c0"/><path d="M759 786l3-6 3 6z" fill="#ffd800"/><path d="M761 789l3 3 6-9" stroke="#20c020" stroke-width="2.5" fill="none"/><path d="M915 784l7-7 8 2 1 7-7 7-8-2z" fill="#222" transform="rotate(0 923 785)"/><path d="M923 785L923.00 780.00A5 5 0 0 1 927.33 782.50z" fill="#ff2020"/><path d="M923 785L927.33 782.50A5 5 0 0 1 927.33 787.50z" fill="#ffd000"/><path d="M923 785L927.33 787.50A5 5 0 0 1 923.00 790.00z" fill="#20d020"/><path d="M923 785L923.00 790.00A5 5 0 0 1 918.67 787.50z" fill="#00c8ff"/><path d="M923 785L918.67 787.50A5 5 0 0 1 918.67 782.50z" fill="#2040ff"/><path d="M923 785L918.67 782.50A5 5 0 0 1 923.00 780.00z" fill="#e020e0"/><text x="462" y="790" font-family="Liberation Sans" font-size="12" fill="#fff" textLength="110" lengthAdjust="spacingAndGlyphs">Fibonacci/Galactic ...</text><text x="622" y="790" font-family="Liberation Sans" font-size="12" fill="#fff" textLength="67" lengthAdjust="spacingAndGlyphs">Notowania 2</text><text x="777" y="790" font-family="Liberation Sans" font-size="12" fill="#fff" textLength="112" lengthAdjust="spacingAndGlyphs">Raporty i rozwiązani...</text><text x="935" y="790" font-family="Liberation Sans" font-size="12" fill="#fff" textLength="114" lengthAdjust="spacingAndGlyphs">Microsoft Photo Edi...</text><text x="1074" y="788" font-family="Liberation Sans" font-size="12" fill="#c8ccd0" textLength="12" lengthAdjust="spacingAndGlyphs">PL</text><rect x="1094.5" y="783.5" width="14" height="7" rx="1" fill="#888" stroke="#bbb"/><path d="M1097 783q0-3 4-3h3" stroke="#999" fill="none"/><path d="M1127 781l-5 4 5 4" stroke="#d0d4d8" stroke-width="2" fill="none"/><rect x="1135" y="775" width="16" height="16" fill="#000"/><ellipse cx="1143" cy="783" rx="6" ry="4.5" fill="#90b8e0"/><path d="M1135 789l6-5 3 1 7-6" stroke="#0020ff" fill="none"/><path d="M1153 776h13q3 0 2 4l-3 10q-1 2-3 2h-9z" fill="#e02020"/><circle cx="1160" cy="783" r="4" fill="#fff"/><circle cx="1160" cy="783" r="2.5" fill="#e02020"/><rect x="1183" y="779" width="4" height="6" fill="#fff"/><rect x="1189" y="777" width="7" height="14" fill="#c0e8c0" stroke="#fff"/><rect x="1184" y="776" width="1" height="3" fill="#ddd"/><rect x="1186" y="776" width="1" height="3" fill="#ddd"/><rect x="1203" y="775" width="9" height="8" fill="#2a70d0" stroke="#ddd"/><rect x="1199" y="779" width="9" height="8" fill="#2a70d0" stroke="#ddd"/><circle cx="1211" cy="787" r="4" fill="#20a040"/><path d="M1218 780h3l4-4v14l-4-4h-3z" fill="#e0e4e8"/><path d="M1227 780q2 3 0 6M1229 778q4 5 0 10" stroke="#30c060" fill="none"/><text x="1240" y="789" font-family="Liberation Sans" font-size="13" fill="#fff" textLength="26" lengthAdjust="spacingAndGlyphs">20:41</text></svg>
</body></html>
